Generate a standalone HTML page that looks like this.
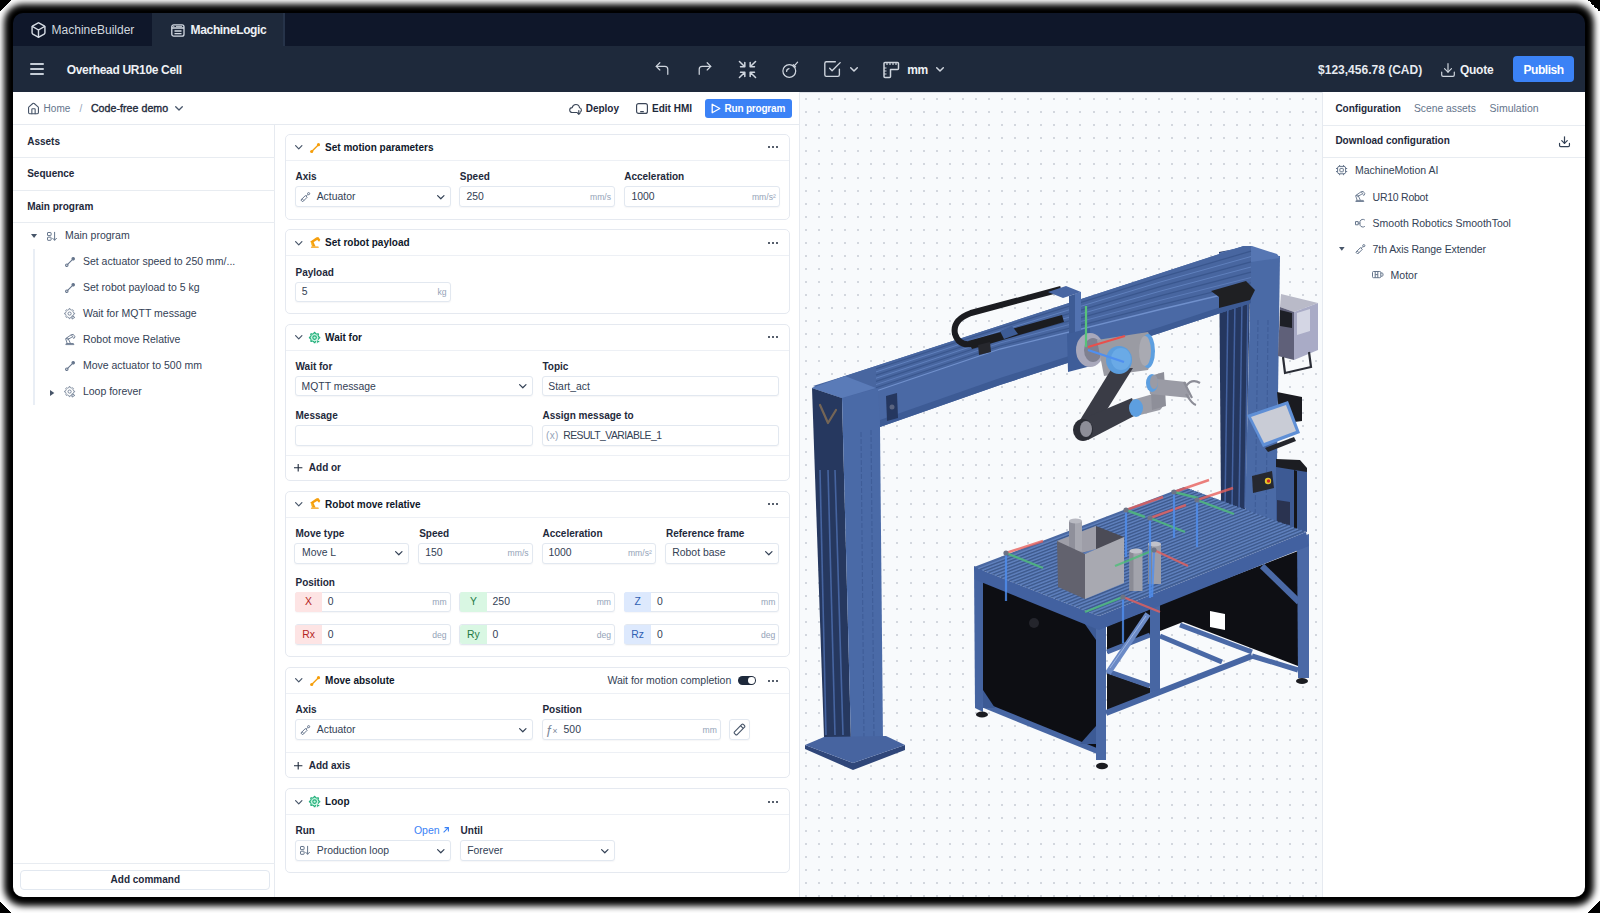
<!DOCTYPE html>
<html><head><meta charset="utf-8">
<style>
*{box-sizing:border-box;margin:0;padding:0}
html,body{width:1600px;height:913px;overflow:hidden;background:#000;font-family:"Liberation Sans",sans-serif;}
.bg{position:absolute;left:0;top:0;width:1600px;height:913px;background:#fff}
.cn{position:absolute;width:12px;height:12px}
.win{position:absolute;left:13px;top:13px;width:1572px;height:884px;border-radius:10px;overflow:hidden;background:transparent;box-shadow:0 0 6px 9px #000}
.in{position:absolute;left:-13px;top:-13px;width:1600px;height:913px}
.a{position:absolute}
.t{position:absolute;white-space:nowrap;line-height:1}
svg{overflow:visible}
</style></head>
<body><div class="bg"></div><div class="cn" style="left:0;top:0;background:linear-gradient(135deg,#000 50%,rgba(0,0,0,0) 50%)"></div><div class="cn" style="right:0;top:0;background:linear-gradient(225deg,#000 50%,rgba(0,0,0,0) 50%)"></div><div class="cn" style="left:0;bottom:0;background:linear-gradient(45deg,#000 50%,rgba(0,0,0,0) 50%)"></div><div class="cn" style="right:0;bottom:0;background:linear-gradient(315deg,#000 50%,rgba(0,0,0,0) 50%)"></div><div style="position:absolute;left:11px;top:11px;width:1576px;height:888px;border-radius:12px;background:#000"></div>
<div class="win"><div class="in">
<div class="a" style="left:13px;top:13px;width:1572px;height:33px;background:#0f172a"></div>
<div class="a" style="left:152px;top:13px;width:133px;height:33px;background:#1e293b;border-right:2px solid #263349"></div>
<div class="a" style="left:13px;top:46px;width:1572px;height:46px;background:#1e293b"></div>
<svg class="a" style="left:31px;top:22px;" width="15" height="16" viewBox="1.5 1.5 21 21"><g fill="none" stroke="#d4dae3" stroke-width="2" stroke-linejoin="round" stroke-linecap="round"><path d="M21 8a2 2 0 0 0-1-1.73l-7-4a2 2 0 0 0-2 0l-7 4A2 2 0 0 0 3 8v8a2 2 0 0 0 1 1.73l7 4a2 2 0 0 0 2 0l7-4A2 2 0 0 0 21 16Z"/><path d="m3.3 7 8.7 5 8.7-5"/><path d="M12 22V12"/></g></svg>
<div class="t" style="left:51.6px;top:24.00px;font-size:12px;font-weight:400;color:#d1d7df;">MachineBuilder</div>
<svg class="a" style="left:170.5px;top:23.5px;" width="14" height="13" viewBox="0 0 14 13"><g fill="none" stroke="#d4dae3" stroke-width="1.3"><rect x="0.8" y="0.8" width="12.2" height="11.4" rx="2"/><path d="M0.8 4H13"/><path d="M3.5 7H10.5M3.5 9.6H10.5"/></g><circle cx="2.8" cy="2.4" r="0.6" fill="#d4dae3"/><path d="M5 2.4H11" stroke="#d4dae3" stroke-width="0.9"/></svg>
<div class="t" style="left:190.6px;top:24.00px;font-size:12px;font-weight:700;color:#eef1f5;letter-spacing:-0.35px">MachineLogic</div>
<div class="a" style="left:30px;top:63.349999999999994px;width:14px;height:1.5px;background:#c5ccd6;border-radius:1px"></div>
<div class="a" style="left:30px;top:68.35px;width:14px;height:1.5px;background:#c5ccd6;border-radius:1px"></div>
<div class="a" style="left:30px;top:73.25px;width:14px;height:1.5px;background:#c5ccd6;border-radius:1px"></div>
<div class="t" style="left:66.7px;top:64.00px;font-size:12px;font-weight:700;color:#eef1f5;letter-spacing:-0.33px">Overhead UR10e Cell</div>
<svg class="a" style="left:655px;top:62px;" width="14" height="13" viewBox="3 3 18 18"><g fill="none" stroke="#cfd5de" stroke-width="1.7" stroke-linecap="round" stroke-linejoin="round"><polyline points="9 14 4 9 9 4"/><path d="M20 20v-7a4 4 0 0 0-4-4H4"/></g></svg>
<svg class="a" style="left:698px;top:62px;" width="14" height="13" viewBox="3 3 18 18"><g fill="none" stroke="#cfd5de" stroke-width="1.7" stroke-linecap="round" stroke-linejoin="round"><polyline points="15 14 20 9 15 4"/><path d="M4 20v-7a4 4 0 0 1 4-4h12"/></g></svg>
<svg class="a" style="left:738.5px;top:61px;" width="17" height="17" viewBox="2.5 2.5 19 19"><g fill="none" stroke="#cfd5de" stroke-width="1.7" stroke-linecap="round" stroke-linejoin="round"><path d="m15 15 6 6m-6-6v4.8m0-4.8h4.8"/><path d="M9 19.8V15m0 0H4.2M9 15l-6 6"/><path d="M15 4.2V9m0 0h4.8M15 9l6-6"/><path d="M9 4.2V9m0 0H4.2M9 9 3 3"/></g></svg>
<svg class="a" style="left:780.5px;top:61px;" width="18" height="17" viewBox="0 0 18 17"><g fill="none" stroke="#cfd5de" stroke-width="1.25" stroke-linecap="round" stroke-linejoin="round"><circle cx="8.3" cy="10" r="6.4"/><path d="M5.6 10.4a2.9 2.9 0 0 1 2.4-2.7"/><path d="M12.6 5.6 L16.6 1.2"/><path d="M12.3 3.6 L14.6 5.9"/></g></svg>
<svg class="a" style="left:824px;top:61px;" width="17" height="17" viewBox="2 2 21 21"><g fill="none" stroke="#cfd5de" stroke-width="1.7" stroke-linecap="round" stroke-linejoin="round"><polyline points="9 11 12 14 22 4"/><path d="M21 12v7a2 2 0 0 1-2 2H5a2 2 0 0 1-2-2V5a2 2 0 0 1 2-2h11"/></g></svg>
<svg class="a" style="left:850px;top:66.5px;" width="8" height="5" viewBox="0 0 8 5"><path d="M0.7 0.7 L4 4 L7.3 0.7" fill="none" stroke="#cfd5de" stroke-width="1.5" stroke-linecap="round" stroke-linejoin="round"/></svg>
<svg class="a" style="left:883px;top:61.5px;" width="16" height="16" viewBox="0 0 16 16"><g fill="none" stroke="#cfd5de" stroke-width="1.5" stroke-linejoin="round"><path d="M1 1.5a1 1 0 0 1 1-1h12.5a1 1 0 0 1 1 1v5a1 1 0 0 1-1 1H7.5v7a1 1 0 0 1-1 1H2a1 1 0 0 1-1-1Z"/><path d="M4 0.5v2.5M7 0.5v2.5M10 0.5v2.5M13 0.5v2.5M1 9h2.5M1 12h2.5M1 6h2.5" stroke-width="1.2"/></g></svg>
<div class="t" style="left:907.3px;top:64.00px;font-size:12px;font-weight:700;color:#eef1f5;letter-spacing:-0.4px">mm</div>
<svg class="a" style="left:935.5px;top:66.5px;" width="8" height="5" viewBox="0 0 8 5"><path d="M0.7 0.7 L4 4 L7.3 0.7" fill="none" stroke="#cfd5de" stroke-width="1.5" stroke-linecap="round" stroke-linejoin="round"/></svg>
<div class="t" style="left:1318.1px;top:64.00px;font-size:12px;font-weight:700;color:#e6eaf0;">$123,456.78 (CAD)</div>
<svg class="a" style="left:1441px;top:62.5px;" width="14" height="14" viewBox="2 2 20 20"><g fill="none" stroke="#cfd5de" stroke-width="1.7" stroke-linecap="round" stroke-linejoin="round"><path d="M21 15v4a2 2 0 0 1-2 2H5a2 2 0 0 1-2-2v-4"/><polyline points="7 10 12 15 17 10"/><line x1="12" y1="15" x2="12" y2="3"/></g></svg>
<div class="t" style="left:1459.9px;top:64.00px;font-size:12px;font-weight:700;color:#eef1f5;letter-spacing:-0.25px">Quote</div>
<div class="a" style="left:1513px;top:56px;width:61px;height:26px;background:#3b82f6;border-radius:4px"></div>
<div class="t" style="left:1523.5px;top:64.00px;font-size:12px;font-weight:700;color:#ffffff;letter-spacing:-0.45px">Publish</div>
<div class="a" style="left:13px;top:92px;width:786px;height:33px;background:#fff;border-bottom:1px solid #e6eaf0"></div>
<svg class="a" style="left:28px;top:102.5px;" width="11" height="11.5" viewBox="2 1.5 20 21"><g fill="none" stroke="#475569" stroke-width="2" stroke-linecap="round" stroke-linejoin="round"><path d="M15 21v-8a1 1 0 0 0-1-1h-4a1 1 0 0 0-1 1v8"/><path d="M3 10a2 2 0 0 1 .709-1.528l7-5.999a2 2 0 0 1 2.582 0l7 5.999A2 2 0 0 1 21 10v9a2 2 0 0 1-2 2H5a2 2 0 0 1-2-2z"/></g></svg>
<div class="t" style="left:43.6px;top:104.00px;font-size:10px;font-weight:400;color:#64748b;">Home</div>
<div class="t" style="left:79.5px;top:104.00px;font-size:10px;font-weight:400;color:#94a3b8;">/</div>
<div class="t" style="left:90.9px;top:103.00px;font-size:10.6px;font-weight:400;color:#1e293b;-webkit-text-stroke:0.35px #1e293b;letter-spacing:0.05px">Code-free demo</div>
<svg class="a" style="left:174.5px;top:106px;" width="8" height="5" viewBox="0 0 8 5"><path d="M0.7 0.7 L4 4 L7.3 0.7" fill="none" stroke="#475569" stroke-width="1.3" stroke-linecap="round" stroke-linejoin="round"/></svg>
<svg class="a" style="left:568.8px;top:103.2px;" width="13" height="12" viewBox="0 0 13 12"><g fill="none" stroke="#3b4658" stroke-width="1.15" stroke-linecap="round" stroke-linejoin="round"><path d="M7.8 9.5 H3.3 C1.6 9.5 0.7 8.3 0.7 7 C0.7 5.6 1.8 4.6 3.2 4.6 C3.6 2.6 5.2 1.5 6.9 1.5 C8.9 1.5 10.3 2.9 10.5 4.8 C11.7 5.0 12.4 6 12.4 7.1 C12.4 7.9 12.1 8.5 11.6 8.9"/><path d="M9.8 7.6 V11.2 M8.4 9.9 L9.8 11.3 L11.2 9.9"/></g></svg>
<div class="t" style="left:585.7px;top:104.00px;font-size:10px;font-weight:700;color:#1e293b;">Deploy</div>
<svg class="a" style="left:636px;top:103px;" width="12" height="11" viewBox="0 0 12 11"><g fill="none" stroke="#3b4658" stroke-width="1.15"><rect x="0.6" y="0.6" width="10.8" height="9.8" rx="2"/><path d="M4.2 8.6h3.6" stroke-width="1.3"/></g></svg>
<div class="t" style="left:652.0px;top:104.00px;font-size:10px;font-weight:700;color:#1e293b;">Edit HMI</div>
<div class="a" style="left:705px;top:98.5px;width:87px;height:19.5px;background:#3b82f6;border-radius:3px"></div>
<svg class="a" style="left:710.5px;top:102.5px;" width="10" height="11" viewBox="0 0 10 11"><path d="M1.2 1.2 L8.8 5.5 L1.2 9.8 Z" fill="none" stroke="#fff" stroke-width="1.3" stroke-linejoin="round"/></svg>
<div class="t" style="left:724.5px;top:104.00px;font-size:10px;font-weight:700;color:#ffffff;letter-spacing:-0.2px">Run program</div>
<div class="a" style="left:13px;top:125px;width:262px;height:772px;background:#fff;border-right:1px solid #e6eaf0"></div>
<div class="a" style="left:13px;top:157px;width:262px;height:1px;background:#e8ecf1"></div>
<div class="a" style="left:13px;top:190px;width:262px;height:1px;background:#e8ecf1"></div>
<div class="a" style="left:13px;top:222px;width:262px;height:1px;background:#e8ecf1"></div>
<div class="t" style="left:27.2px;top:137.00px;font-size:10px;font-weight:700;color:#1e293b;">Assets</div>
<div class="t" style="left:27.2px;top:169.00px;font-size:10px;font-weight:700;color:#1e293b;">Sequence</div>
<div class="t" style="left:27.2px;top:202.00px;font-size:10px;font-weight:700;color:#1e293b;">Main program</div>
<div class="a" style="left:13px;top:862.5px;width:262px;height:1.0px;background:#e8ecf1"></div>
<div class="a" style="left:20px;top:870px;width:250px;height:20px;background:#fff;border:1px solid #e2e8f0;border-radius:4px"></div>
<div class="t" style="left:110.6px;top:875.00px;font-size:10px;font-weight:700;color:#1e293b;">Add command</div>
<div class="a" style="left:275px;top:125px;width:524px;height:772px;background:#fff"></div>
<div class="a" style="left:799px;top:92px;width:1px;height:805px;background:#e6eaf0"></div>
<div class="a" style="left:800px;top:92px;width:522px;height:805px;background-color:#f8fafc;border-top:1px solid #dfe2e8"></div>
<svg class="a" style="left:0;top:0" width="1600" height="913" viewBox="0 0 1600 913"><path d="M805 98h2v2h-2zM805 111h2v2h-2zM805 124h2v2h-2zM805 137h2v2h-2zM805 150h2v2h-2zM805 163h2v2h-2zM805 177h2v2h-2zM805 190h2v2h-2zM805 203h2v2h-2zM805 216h2v2h-2zM805 229h2v2h-2zM805 242h2v2h-2zM805 255h2v2h-2zM805 268h2v2h-2zM805 281h2v2h-2zM805 294h2v2h-2zM805 307h2v2h-2zM805 320h2v2h-2zM805 333h2v2h-2zM805 346h2v2h-2zM805 360h2v2h-2zM805 373h2v2h-2zM805 386h2v2h-2zM805 399h2v2h-2zM805 412h2v2h-2zM805 425h2v2h-2zM805 438h2v2h-2zM805 451h2v2h-2zM805 464h2v2h-2zM805 477h2v2h-2zM805 490h2v2h-2zM805 503h2v2h-2zM805 516h2v2h-2zM805 529h2v2h-2zM805 542h2v2h-2zM805 556h2v2h-2zM805 569h2v2h-2zM805 582h2v2h-2zM805 595h2v2h-2zM805 608h2v2h-2zM805 621h2v2h-2zM805 634h2v2h-2zM805 647h2v2h-2zM805 660h2v2h-2zM805 673h2v2h-2zM805 686h2v2h-2zM805 699h2v2h-2zM805 712h2v2h-2zM805 725h2v2h-2zM805 739h2v2h-2zM805 752h2v2h-2zM805 765h2v2h-2zM805 778h2v2h-2zM805 791h2v2h-2zM805 804h2v2h-2zM805 817h2v2h-2zM805 830h2v2h-2zM805 843h2v2h-2zM805 856h2v2h-2zM805 869h2v2h-2zM805 882h2v2h-2zM805 895h2v2h-2zM818 98h2v2h-2zM818 111h2v2h-2zM818 124h2v2h-2zM818 137h2v2h-2zM818 150h2v2h-2zM818 163h2v2h-2zM818 177h2v2h-2zM818 190h2v2h-2zM818 203h2v2h-2zM818 216h2v2h-2zM818 229h2v2h-2zM818 242h2v2h-2zM818 255h2v2h-2zM818 268h2v2h-2zM818 281h2v2h-2zM818 294h2v2h-2zM818 307h2v2h-2zM818 320h2v2h-2zM818 333h2v2h-2zM818 346h2v2h-2zM818 360h2v2h-2zM818 373h2v2h-2zM818 386h2v2h-2zM818 399h2v2h-2zM818 412h2v2h-2zM818 425h2v2h-2zM818 438h2v2h-2zM818 451h2v2h-2zM818 464h2v2h-2zM818 477h2v2h-2zM818 490h2v2h-2zM818 503h2v2h-2zM818 516h2v2h-2zM818 529h2v2h-2zM818 542h2v2h-2zM818 556h2v2h-2zM818 569h2v2h-2zM818 582h2v2h-2zM818 595h2v2h-2zM818 608h2v2h-2zM818 621h2v2h-2zM818 634h2v2h-2zM818 647h2v2h-2zM818 660h2v2h-2zM818 673h2v2h-2zM818 686h2v2h-2zM818 699h2v2h-2zM818 712h2v2h-2zM818 725h2v2h-2zM818 739h2v2h-2zM818 752h2v2h-2zM818 765h2v2h-2zM818 778h2v2h-2zM818 791h2v2h-2zM818 804h2v2h-2zM818 817h2v2h-2zM818 830h2v2h-2zM818 843h2v2h-2zM818 856h2v2h-2zM818 869h2v2h-2zM818 882h2v2h-2zM818 895h2v2h-2zM831 98h2v2h-2zM831 111h2v2h-2zM831 124h2v2h-2zM831 137h2v2h-2zM831 150h2v2h-2zM831 163h2v2h-2zM831 177h2v2h-2zM831 190h2v2h-2zM831 203h2v2h-2zM831 216h2v2h-2zM831 229h2v2h-2zM831 242h2v2h-2zM831 255h2v2h-2zM831 268h2v2h-2zM831 281h2v2h-2zM831 294h2v2h-2zM831 307h2v2h-2zM831 320h2v2h-2zM831 333h2v2h-2zM831 346h2v2h-2zM831 360h2v2h-2zM831 373h2v2h-2zM831 386h2v2h-2zM831 399h2v2h-2zM831 412h2v2h-2zM831 425h2v2h-2zM831 438h2v2h-2zM831 451h2v2h-2zM831 464h2v2h-2zM831 477h2v2h-2zM831 490h2v2h-2zM831 503h2v2h-2zM831 516h2v2h-2zM831 529h2v2h-2zM831 542h2v2h-2zM831 556h2v2h-2zM831 569h2v2h-2zM831 582h2v2h-2zM831 595h2v2h-2zM831 608h2v2h-2zM831 621h2v2h-2zM831 634h2v2h-2zM831 647h2v2h-2zM831 660h2v2h-2zM831 673h2v2h-2zM831 686h2v2h-2zM831 699h2v2h-2zM831 712h2v2h-2zM831 725h2v2h-2zM831 739h2v2h-2zM831 752h2v2h-2zM831 765h2v2h-2zM831 778h2v2h-2zM831 791h2v2h-2zM831 804h2v2h-2zM831 817h2v2h-2zM831 830h2v2h-2zM831 843h2v2h-2zM831 856h2v2h-2zM831 869h2v2h-2zM831 882h2v2h-2zM831 895h2v2h-2zM844 98h2v2h-2zM844 111h2v2h-2zM844 124h2v2h-2zM844 137h2v2h-2zM844 150h2v2h-2zM844 163h2v2h-2zM844 177h2v2h-2zM844 190h2v2h-2zM844 203h2v2h-2zM844 216h2v2h-2zM844 229h2v2h-2zM844 242h2v2h-2zM844 255h2v2h-2zM844 268h2v2h-2zM844 281h2v2h-2zM844 294h2v2h-2zM844 307h2v2h-2zM844 320h2v2h-2zM844 333h2v2h-2zM844 346h2v2h-2zM844 360h2v2h-2zM844 373h2v2h-2zM844 386h2v2h-2zM844 399h2v2h-2zM844 412h2v2h-2zM844 425h2v2h-2zM844 438h2v2h-2zM844 451h2v2h-2zM844 464h2v2h-2zM844 477h2v2h-2zM844 490h2v2h-2zM844 503h2v2h-2zM844 516h2v2h-2zM844 529h2v2h-2zM844 542h2v2h-2zM844 556h2v2h-2zM844 569h2v2h-2zM844 582h2v2h-2zM844 595h2v2h-2zM844 608h2v2h-2zM844 621h2v2h-2zM844 634h2v2h-2zM844 647h2v2h-2zM844 660h2v2h-2zM844 673h2v2h-2zM844 686h2v2h-2zM844 699h2v2h-2zM844 712h2v2h-2zM844 725h2v2h-2zM844 739h2v2h-2zM844 752h2v2h-2zM844 765h2v2h-2zM844 778h2v2h-2zM844 791h2v2h-2zM844 804h2v2h-2zM844 817h2v2h-2zM844 830h2v2h-2zM844 843h2v2h-2zM844 856h2v2h-2zM844 869h2v2h-2zM844 882h2v2h-2zM844 895h2v2h-2zM857 98h2v2h-2zM857 111h2v2h-2zM857 124h2v2h-2zM857 137h2v2h-2zM857 150h2v2h-2zM857 163h2v2h-2zM857 177h2v2h-2zM857 190h2v2h-2zM857 203h2v2h-2zM857 216h2v2h-2zM857 229h2v2h-2zM857 242h2v2h-2zM857 255h2v2h-2zM857 268h2v2h-2zM857 281h2v2h-2zM857 294h2v2h-2zM857 307h2v2h-2zM857 320h2v2h-2zM857 333h2v2h-2zM857 346h2v2h-2zM857 360h2v2h-2zM857 373h2v2h-2zM857 386h2v2h-2zM857 399h2v2h-2zM857 412h2v2h-2zM857 425h2v2h-2zM857 438h2v2h-2zM857 451h2v2h-2zM857 464h2v2h-2zM857 477h2v2h-2zM857 490h2v2h-2zM857 503h2v2h-2zM857 516h2v2h-2zM857 529h2v2h-2zM857 542h2v2h-2zM857 556h2v2h-2zM857 569h2v2h-2zM857 582h2v2h-2zM857 595h2v2h-2zM857 608h2v2h-2zM857 621h2v2h-2zM857 634h2v2h-2zM857 647h2v2h-2zM857 660h2v2h-2zM857 673h2v2h-2zM857 686h2v2h-2zM857 699h2v2h-2zM857 712h2v2h-2zM857 725h2v2h-2zM857 739h2v2h-2zM857 752h2v2h-2zM857 765h2v2h-2zM857 778h2v2h-2zM857 791h2v2h-2zM857 804h2v2h-2zM857 817h2v2h-2zM857 830h2v2h-2zM857 843h2v2h-2zM857 856h2v2h-2zM857 869h2v2h-2zM857 882h2v2h-2zM857 895h2v2h-2zM870 98h2v2h-2zM870 111h2v2h-2zM870 124h2v2h-2zM870 137h2v2h-2zM870 150h2v2h-2zM870 163h2v2h-2zM870 177h2v2h-2zM870 190h2v2h-2zM870 203h2v2h-2zM870 216h2v2h-2zM870 229h2v2h-2zM870 242h2v2h-2zM870 255h2v2h-2zM870 268h2v2h-2zM870 281h2v2h-2zM870 294h2v2h-2zM870 307h2v2h-2zM870 320h2v2h-2zM870 333h2v2h-2zM870 346h2v2h-2zM870 360h2v2h-2zM870 373h2v2h-2zM870 386h2v2h-2zM870 399h2v2h-2zM870 412h2v2h-2zM870 425h2v2h-2zM870 438h2v2h-2zM870 451h2v2h-2zM870 464h2v2h-2zM870 477h2v2h-2zM870 490h2v2h-2zM870 503h2v2h-2zM870 516h2v2h-2zM870 529h2v2h-2zM870 542h2v2h-2zM870 556h2v2h-2zM870 569h2v2h-2zM870 582h2v2h-2zM870 595h2v2h-2zM870 608h2v2h-2zM870 621h2v2h-2zM870 634h2v2h-2zM870 647h2v2h-2zM870 660h2v2h-2zM870 673h2v2h-2zM870 686h2v2h-2zM870 699h2v2h-2zM870 712h2v2h-2zM870 725h2v2h-2zM870 739h2v2h-2zM870 752h2v2h-2zM870 765h2v2h-2zM870 778h2v2h-2zM870 791h2v2h-2zM870 804h2v2h-2zM870 817h2v2h-2zM870 830h2v2h-2zM870 843h2v2h-2zM870 856h2v2h-2zM870 869h2v2h-2zM870 882h2v2h-2zM870 895h2v2h-2zM883 98h2v2h-2zM883 111h2v2h-2zM883 124h2v2h-2zM883 137h2v2h-2zM883 150h2v2h-2zM883 163h2v2h-2zM883 177h2v2h-2zM883 190h2v2h-2zM883 203h2v2h-2zM883 216h2v2h-2zM883 229h2v2h-2zM883 242h2v2h-2zM883 255h2v2h-2zM883 268h2v2h-2zM883 281h2v2h-2zM883 294h2v2h-2zM883 307h2v2h-2zM883 320h2v2h-2zM883 333h2v2h-2zM883 346h2v2h-2zM883 360h2v2h-2zM883 373h2v2h-2zM883 386h2v2h-2zM883 399h2v2h-2zM883 412h2v2h-2zM883 425h2v2h-2zM883 438h2v2h-2zM883 451h2v2h-2zM883 464h2v2h-2zM883 477h2v2h-2zM883 490h2v2h-2zM883 503h2v2h-2zM883 516h2v2h-2zM883 529h2v2h-2zM883 542h2v2h-2zM883 556h2v2h-2zM883 569h2v2h-2zM883 582h2v2h-2zM883 595h2v2h-2zM883 608h2v2h-2zM883 621h2v2h-2zM883 634h2v2h-2zM883 647h2v2h-2zM883 660h2v2h-2zM883 673h2v2h-2zM883 686h2v2h-2zM883 699h2v2h-2zM883 712h2v2h-2zM883 725h2v2h-2zM883 739h2v2h-2zM883 752h2v2h-2zM883 765h2v2h-2zM883 778h2v2h-2zM883 791h2v2h-2zM883 804h2v2h-2zM883 817h2v2h-2zM883 830h2v2h-2zM883 843h2v2h-2zM883 856h2v2h-2zM883 869h2v2h-2zM883 882h2v2h-2zM883 895h2v2h-2zM896 98h2v2h-2zM896 111h2v2h-2zM896 124h2v2h-2zM896 137h2v2h-2zM896 150h2v2h-2zM896 163h2v2h-2zM896 177h2v2h-2zM896 190h2v2h-2zM896 203h2v2h-2zM896 216h2v2h-2zM896 229h2v2h-2zM896 242h2v2h-2zM896 255h2v2h-2zM896 268h2v2h-2zM896 281h2v2h-2zM896 294h2v2h-2zM896 307h2v2h-2zM896 320h2v2h-2zM896 333h2v2h-2zM896 346h2v2h-2zM896 360h2v2h-2zM896 373h2v2h-2zM896 386h2v2h-2zM896 399h2v2h-2zM896 412h2v2h-2zM896 425h2v2h-2zM896 438h2v2h-2zM896 451h2v2h-2zM896 464h2v2h-2zM896 477h2v2h-2zM896 490h2v2h-2zM896 503h2v2h-2zM896 516h2v2h-2zM896 529h2v2h-2zM896 542h2v2h-2zM896 556h2v2h-2zM896 569h2v2h-2zM896 582h2v2h-2zM896 595h2v2h-2zM896 608h2v2h-2zM896 621h2v2h-2zM896 634h2v2h-2zM896 647h2v2h-2zM896 660h2v2h-2zM896 673h2v2h-2zM896 686h2v2h-2zM896 699h2v2h-2zM896 712h2v2h-2zM896 725h2v2h-2zM896 739h2v2h-2zM896 752h2v2h-2zM896 765h2v2h-2zM896 778h2v2h-2zM896 791h2v2h-2zM896 804h2v2h-2zM896 817h2v2h-2zM896 830h2v2h-2zM896 843h2v2h-2zM896 856h2v2h-2zM896 869h2v2h-2zM896 882h2v2h-2zM896 895h2v2h-2zM910 98h2v2h-2zM910 111h2v2h-2zM910 124h2v2h-2zM910 137h2v2h-2zM910 150h2v2h-2zM910 163h2v2h-2zM910 177h2v2h-2zM910 190h2v2h-2zM910 203h2v2h-2zM910 216h2v2h-2zM910 229h2v2h-2zM910 242h2v2h-2zM910 255h2v2h-2zM910 268h2v2h-2zM910 281h2v2h-2zM910 294h2v2h-2zM910 307h2v2h-2zM910 320h2v2h-2zM910 333h2v2h-2zM910 346h2v2h-2zM910 360h2v2h-2zM910 373h2v2h-2zM910 386h2v2h-2zM910 399h2v2h-2zM910 412h2v2h-2zM910 425h2v2h-2zM910 438h2v2h-2zM910 451h2v2h-2zM910 464h2v2h-2zM910 477h2v2h-2zM910 490h2v2h-2zM910 503h2v2h-2zM910 516h2v2h-2zM910 529h2v2h-2zM910 542h2v2h-2zM910 556h2v2h-2zM910 569h2v2h-2zM910 582h2v2h-2zM910 595h2v2h-2zM910 608h2v2h-2zM910 621h2v2h-2zM910 634h2v2h-2zM910 647h2v2h-2zM910 660h2v2h-2zM910 673h2v2h-2zM910 686h2v2h-2zM910 699h2v2h-2zM910 712h2v2h-2zM910 725h2v2h-2zM910 739h2v2h-2zM910 752h2v2h-2zM910 765h2v2h-2zM910 778h2v2h-2zM910 791h2v2h-2zM910 804h2v2h-2zM910 817h2v2h-2zM910 830h2v2h-2zM910 843h2v2h-2zM910 856h2v2h-2zM910 869h2v2h-2zM910 882h2v2h-2zM910 895h2v2h-2zM923 98h2v2h-2zM923 111h2v2h-2zM923 124h2v2h-2zM923 137h2v2h-2zM923 150h2v2h-2zM923 163h2v2h-2zM923 177h2v2h-2zM923 190h2v2h-2zM923 203h2v2h-2zM923 216h2v2h-2zM923 229h2v2h-2zM923 242h2v2h-2zM923 255h2v2h-2zM923 268h2v2h-2zM923 281h2v2h-2zM923 294h2v2h-2zM923 307h2v2h-2zM923 320h2v2h-2zM923 333h2v2h-2zM923 346h2v2h-2zM923 360h2v2h-2zM923 373h2v2h-2zM923 386h2v2h-2zM923 399h2v2h-2zM923 412h2v2h-2zM923 425h2v2h-2zM923 438h2v2h-2zM923 451h2v2h-2zM923 464h2v2h-2zM923 477h2v2h-2zM923 490h2v2h-2zM923 503h2v2h-2zM923 516h2v2h-2zM923 529h2v2h-2zM923 542h2v2h-2zM923 556h2v2h-2zM923 569h2v2h-2zM923 582h2v2h-2zM923 595h2v2h-2zM923 608h2v2h-2zM923 621h2v2h-2zM923 634h2v2h-2zM923 647h2v2h-2zM923 660h2v2h-2zM923 673h2v2h-2zM923 686h2v2h-2zM923 699h2v2h-2zM923 712h2v2h-2zM923 725h2v2h-2zM923 739h2v2h-2zM923 752h2v2h-2zM923 765h2v2h-2zM923 778h2v2h-2zM923 791h2v2h-2zM923 804h2v2h-2zM923 817h2v2h-2zM923 830h2v2h-2zM923 843h2v2h-2zM923 856h2v2h-2zM923 869h2v2h-2zM923 882h2v2h-2zM923 895h2v2h-2zM936 98h2v2h-2zM936 111h2v2h-2zM936 124h2v2h-2zM936 137h2v2h-2zM936 150h2v2h-2zM936 163h2v2h-2zM936 177h2v2h-2zM936 190h2v2h-2zM936 203h2v2h-2zM936 216h2v2h-2zM936 229h2v2h-2zM936 242h2v2h-2zM936 255h2v2h-2zM936 268h2v2h-2zM936 281h2v2h-2zM936 294h2v2h-2zM936 307h2v2h-2zM936 320h2v2h-2zM936 333h2v2h-2zM936 346h2v2h-2zM936 360h2v2h-2zM936 373h2v2h-2zM936 386h2v2h-2zM936 399h2v2h-2zM936 412h2v2h-2zM936 425h2v2h-2zM936 438h2v2h-2zM936 451h2v2h-2zM936 464h2v2h-2zM936 477h2v2h-2zM936 490h2v2h-2zM936 503h2v2h-2zM936 516h2v2h-2zM936 529h2v2h-2zM936 542h2v2h-2zM936 556h2v2h-2zM936 569h2v2h-2zM936 582h2v2h-2zM936 595h2v2h-2zM936 608h2v2h-2zM936 621h2v2h-2zM936 634h2v2h-2zM936 647h2v2h-2zM936 660h2v2h-2zM936 673h2v2h-2zM936 686h2v2h-2zM936 699h2v2h-2zM936 712h2v2h-2zM936 725h2v2h-2zM936 739h2v2h-2zM936 752h2v2h-2zM936 765h2v2h-2zM936 778h2v2h-2zM936 791h2v2h-2zM936 804h2v2h-2zM936 817h2v2h-2zM936 830h2v2h-2zM936 843h2v2h-2zM936 856h2v2h-2zM936 869h2v2h-2zM936 882h2v2h-2zM936 895h2v2h-2zM949 98h2v2h-2zM949 111h2v2h-2zM949 124h2v2h-2zM949 137h2v2h-2zM949 150h2v2h-2zM949 163h2v2h-2zM949 177h2v2h-2zM949 190h2v2h-2zM949 203h2v2h-2zM949 216h2v2h-2zM949 229h2v2h-2zM949 242h2v2h-2zM949 255h2v2h-2zM949 268h2v2h-2zM949 281h2v2h-2zM949 294h2v2h-2zM949 307h2v2h-2zM949 320h2v2h-2zM949 333h2v2h-2zM949 346h2v2h-2zM949 360h2v2h-2zM949 373h2v2h-2zM949 386h2v2h-2zM949 399h2v2h-2zM949 412h2v2h-2zM949 425h2v2h-2zM949 438h2v2h-2zM949 451h2v2h-2zM949 464h2v2h-2zM949 477h2v2h-2zM949 490h2v2h-2zM949 503h2v2h-2zM949 516h2v2h-2zM949 529h2v2h-2zM949 542h2v2h-2zM949 556h2v2h-2zM949 569h2v2h-2zM949 582h2v2h-2zM949 595h2v2h-2zM949 608h2v2h-2zM949 621h2v2h-2zM949 634h2v2h-2zM949 647h2v2h-2zM949 660h2v2h-2zM949 673h2v2h-2zM949 686h2v2h-2zM949 699h2v2h-2zM949 712h2v2h-2zM949 725h2v2h-2zM949 739h2v2h-2zM949 752h2v2h-2zM949 765h2v2h-2zM949 778h2v2h-2zM949 791h2v2h-2zM949 804h2v2h-2zM949 817h2v2h-2zM949 830h2v2h-2zM949 843h2v2h-2zM949 856h2v2h-2zM949 869h2v2h-2zM949 882h2v2h-2zM949 895h2v2h-2zM962 98h2v2h-2zM962 111h2v2h-2zM962 124h2v2h-2zM962 137h2v2h-2zM962 150h2v2h-2zM962 163h2v2h-2zM962 177h2v2h-2zM962 190h2v2h-2zM962 203h2v2h-2zM962 216h2v2h-2zM962 229h2v2h-2zM962 242h2v2h-2zM962 255h2v2h-2zM962 268h2v2h-2zM962 281h2v2h-2zM962 294h2v2h-2zM962 307h2v2h-2zM962 320h2v2h-2zM962 333h2v2h-2zM962 346h2v2h-2zM962 360h2v2h-2zM962 373h2v2h-2zM962 386h2v2h-2zM962 399h2v2h-2zM962 412h2v2h-2zM962 425h2v2h-2zM962 438h2v2h-2zM962 451h2v2h-2zM962 464h2v2h-2zM962 477h2v2h-2zM962 490h2v2h-2zM962 503h2v2h-2zM962 516h2v2h-2zM962 529h2v2h-2zM962 542h2v2h-2zM962 556h2v2h-2zM962 569h2v2h-2zM962 582h2v2h-2zM962 595h2v2h-2zM962 608h2v2h-2zM962 621h2v2h-2zM962 634h2v2h-2zM962 647h2v2h-2zM962 660h2v2h-2zM962 673h2v2h-2zM962 686h2v2h-2zM962 699h2v2h-2zM962 712h2v2h-2zM962 725h2v2h-2zM962 739h2v2h-2zM962 752h2v2h-2zM962 765h2v2h-2zM962 778h2v2h-2zM962 791h2v2h-2zM962 804h2v2h-2zM962 817h2v2h-2zM962 830h2v2h-2zM962 843h2v2h-2zM962 856h2v2h-2zM962 869h2v2h-2zM962 882h2v2h-2zM962 895h2v2h-2zM975 98h2v2h-2zM975 111h2v2h-2zM975 124h2v2h-2zM975 137h2v2h-2zM975 150h2v2h-2zM975 163h2v2h-2zM975 177h2v2h-2zM975 190h2v2h-2zM975 203h2v2h-2zM975 216h2v2h-2zM975 229h2v2h-2zM975 242h2v2h-2zM975 255h2v2h-2zM975 268h2v2h-2zM975 281h2v2h-2zM975 294h2v2h-2zM975 307h2v2h-2zM975 320h2v2h-2zM975 333h2v2h-2zM975 346h2v2h-2zM975 360h2v2h-2zM975 373h2v2h-2zM975 386h2v2h-2zM975 399h2v2h-2zM975 412h2v2h-2zM975 425h2v2h-2zM975 438h2v2h-2zM975 451h2v2h-2zM975 464h2v2h-2zM975 477h2v2h-2zM975 490h2v2h-2zM975 503h2v2h-2zM975 516h2v2h-2zM975 529h2v2h-2zM975 542h2v2h-2zM975 556h2v2h-2zM975 569h2v2h-2zM975 582h2v2h-2zM975 595h2v2h-2zM975 608h2v2h-2zM975 621h2v2h-2zM975 634h2v2h-2zM975 647h2v2h-2zM975 660h2v2h-2zM975 673h2v2h-2zM975 686h2v2h-2zM975 699h2v2h-2zM975 712h2v2h-2zM975 725h2v2h-2zM975 739h2v2h-2zM975 752h2v2h-2zM975 765h2v2h-2zM975 778h2v2h-2zM975 791h2v2h-2zM975 804h2v2h-2zM975 817h2v2h-2zM975 830h2v2h-2zM975 843h2v2h-2zM975 856h2v2h-2zM975 869h2v2h-2zM975 882h2v2h-2zM975 895h2v2h-2zM988 98h2v2h-2zM988 111h2v2h-2zM988 124h2v2h-2zM988 137h2v2h-2zM988 150h2v2h-2zM988 163h2v2h-2zM988 177h2v2h-2zM988 190h2v2h-2zM988 203h2v2h-2zM988 216h2v2h-2zM988 229h2v2h-2zM988 242h2v2h-2zM988 255h2v2h-2zM988 268h2v2h-2zM988 281h2v2h-2zM988 294h2v2h-2zM988 307h2v2h-2zM988 320h2v2h-2zM988 333h2v2h-2zM988 346h2v2h-2zM988 360h2v2h-2zM988 373h2v2h-2zM988 386h2v2h-2zM988 399h2v2h-2zM988 412h2v2h-2zM988 425h2v2h-2zM988 438h2v2h-2zM988 451h2v2h-2zM988 464h2v2h-2zM988 477h2v2h-2zM988 490h2v2h-2zM988 503h2v2h-2zM988 516h2v2h-2zM988 529h2v2h-2zM988 542h2v2h-2zM988 556h2v2h-2zM988 569h2v2h-2zM988 582h2v2h-2zM988 595h2v2h-2zM988 608h2v2h-2zM988 621h2v2h-2zM988 634h2v2h-2zM988 647h2v2h-2zM988 660h2v2h-2zM988 673h2v2h-2zM988 686h2v2h-2zM988 699h2v2h-2zM988 712h2v2h-2zM988 725h2v2h-2zM988 739h2v2h-2zM988 752h2v2h-2zM988 765h2v2h-2zM988 778h2v2h-2zM988 791h2v2h-2zM988 804h2v2h-2zM988 817h2v2h-2zM988 830h2v2h-2zM988 843h2v2h-2zM988 856h2v2h-2zM988 869h2v2h-2zM988 882h2v2h-2zM988 895h2v2h-2zM1001 98h2v2h-2zM1001 111h2v2h-2zM1001 124h2v2h-2zM1001 137h2v2h-2zM1001 150h2v2h-2zM1001 163h2v2h-2zM1001 177h2v2h-2zM1001 190h2v2h-2zM1001 203h2v2h-2zM1001 216h2v2h-2zM1001 229h2v2h-2zM1001 242h2v2h-2zM1001 255h2v2h-2zM1001 268h2v2h-2zM1001 281h2v2h-2zM1001 294h2v2h-2zM1001 307h2v2h-2zM1001 320h2v2h-2zM1001 333h2v2h-2zM1001 346h2v2h-2zM1001 360h2v2h-2zM1001 373h2v2h-2zM1001 386h2v2h-2zM1001 399h2v2h-2zM1001 412h2v2h-2zM1001 425h2v2h-2zM1001 438h2v2h-2zM1001 451h2v2h-2zM1001 464h2v2h-2zM1001 477h2v2h-2zM1001 490h2v2h-2zM1001 503h2v2h-2zM1001 516h2v2h-2zM1001 529h2v2h-2zM1001 542h2v2h-2zM1001 556h2v2h-2zM1001 569h2v2h-2zM1001 582h2v2h-2zM1001 595h2v2h-2zM1001 608h2v2h-2zM1001 621h2v2h-2zM1001 634h2v2h-2zM1001 647h2v2h-2zM1001 660h2v2h-2zM1001 673h2v2h-2zM1001 686h2v2h-2zM1001 699h2v2h-2zM1001 712h2v2h-2zM1001 725h2v2h-2zM1001 739h2v2h-2zM1001 752h2v2h-2zM1001 765h2v2h-2zM1001 778h2v2h-2zM1001 791h2v2h-2zM1001 804h2v2h-2zM1001 817h2v2h-2zM1001 830h2v2h-2zM1001 843h2v2h-2zM1001 856h2v2h-2zM1001 869h2v2h-2zM1001 882h2v2h-2zM1001 895h2v2h-2zM1014 98h2v2h-2zM1014 111h2v2h-2zM1014 124h2v2h-2zM1014 137h2v2h-2zM1014 150h2v2h-2zM1014 163h2v2h-2zM1014 177h2v2h-2zM1014 190h2v2h-2zM1014 203h2v2h-2zM1014 216h2v2h-2zM1014 229h2v2h-2zM1014 242h2v2h-2zM1014 255h2v2h-2zM1014 268h2v2h-2zM1014 281h2v2h-2zM1014 294h2v2h-2zM1014 307h2v2h-2zM1014 320h2v2h-2zM1014 333h2v2h-2zM1014 346h2v2h-2zM1014 360h2v2h-2zM1014 373h2v2h-2zM1014 386h2v2h-2zM1014 399h2v2h-2zM1014 412h2v2h-2zM1014 425h2v2h-2zM1014 438h2v2h-2zM1014 451h2v2h-2zM1014 464h2v2h-2zM1014 477h2v2h-2zM1014 490h2v2h-2zM1014 503h2v2h-2zM1014 516h2v2h-2zM1014 529h2v2h-2zM1014 542h2v2h-2zM1014 556h2v2h-2zM1014 569h2v2h-2zM1014 582h2v2h-2zM1014 595h2v2h-2zM1014 608h2v2h-2zM1014 621h2v2h-2zM1014 634h2v2h-2zM1014 647h2v2h-2zM1014 660h2v2h-2zM1014 673h2v2h-2zM1014 686h2v2h-2zM1014 699h2v2h-2zM1014 712h2v2h-2zM1014 725h2v2h-2zM1014 739h2v2h-2zM1014 752h2v2h-2zM1014 765h2v2h-2zM1014 778h2v2h-2zM1014 791h2v2h-2zM1014 804h2v2h-2zM1014 817h2v2h-2zM1014 830h2v2h-2zM1014 843h2v2h-2zM1014 856h2v2h-2zM1014 869h2v2h-2zM1014 882h2v2h-2zM1014 895h2v2h-2zM1027 98h2v2h-2zM1027 111h2v2h-2zM1027 124h2v2h-2zM1027 137h2v2h-2zM1027 150h2v2h-2zM1027 163h2v2h-2zM1027 177h2v2h-2zM1027 190h2v2h-2zM1027 203h2v2h-2zM1027 216h2v2h-2zM1027 229h2v2h-2zM1027 242h2v2h-2zM1027 255h2v2h-2zM1027 268h2v2h-2zM1027 281h2v2h-2zM1027 294h2v2h-2zM1027 307h2v2h-2zM1027 320h2v2h-2zM1027 333h2v2h-2zM1027 346h2v2h-2zM1027 360h2v2h-2zM1027 373h2v2h-2zM1027 386h2v2h-2zM1027 399h2v2h-2zM1027 412h2v2h-2zM1027 425h2v2h-2zM1027 438h2v2h-2zM1027 451h2v2h-2zM1027 464h2v2h-2zM1027 477h2v2h-2zM1027 490h2v2h-2zM1027 503h2v2h-2zM1027 516h2v2h-2zM1027 529h2v2h-2zM1027 542h2v2h-2zM1027 556h2v2h-2zM1027 569h2v2h-2zM1027 582h2v2h-2zM1027 595h2v2h-2zM1027 608h2v2h-2zM1027 621h2v2h-2zM1027 634h2v2h-2zM1027 647h2v2h-2zM1027 660h2v2h-2zM1027 673h2v2h-2zM1027 686h2v2h-2zM1027 699h2v2h-2zM1027 712h2v2h-2zM1027 725h2v2h-2zM1027 739h2v2h-2zM1027 752h2v2h-2zM1027 765h2v2h-2zM1027 778h2v2h-2zM1027 791h2v2h-2zM1027 804h2v2h-2zM1027 817h2v2h-2zM1027 830h2v2h-2zM1027 843h2v2h-2zM1027 856h2v2h-2zM1027 869h2v2h-2zM1027 882h2v2h-2zM1027 895h2v2h-2zM1040 98h2v2h-2zM1040 111h2v2h-2zM1040 124h2v2h-2zM1040 137h2v2h-2zM1040 150h2v2h-2zM1040 163h2v2h-2zM1040 177h2v2h-2zM1040 190h2v2h-2zM1040 203h2v2h-2zM1040 216h2v2h-2zM1040 229h2v2h-2zM1040 242h2v2h-2zM1040 255h2v2h-2zM1040 268h2v2h-2zM1040 281h2v2h-2zM1040 294h2v2h-2zM1040 307h2v2h-2zM1040 320h2v2h-2zM1040 333h2v2h-2zM1040 346h2v2h-2zM1040 360h2v2h-2zM1040 373h2v2h-2zM1040 386h2v2h-2zM1040 399h2v2h-2zM1040 412h2v2h-2zM1040 425h2v2h-2zM1040 438h2v2h-2zM1040 451h2v2h-2zM1040 464h2v2h-2zM1040 477h2v2h-2zM1040 490h2v2h-2zM1040 503h2v2h-2zM1040 516h2v2h-2zM1040 529h2v2h-2zM1040 542h2v2h-2zM1040 556h2v2h-2zM1040 569h2v2h-2zM1040 582h2v2h-2zM1040 595h2v2h-2zM1040 608h2v2h-2zM1040 621h2v2h-2zM1040 634h2v2h-2zM1040 647h2v2h-2zM1040 660h2v2h-2zM1040 673h2v2h-2zM1040 686h2v2h-2zM1040 699h2v2h-2zM1040 712h2v2h-2zM1040 725h2v2h-2zM1040 739h2v2h-2zM1040 752h2v2h-2zM1040 765h2v2h-2zM1040 778h2v2h-2zM1040 791h2v2h-2zM1040 804h2v2h-2zM1040 817h2v2h-2zM1040 830h2v2h-2zM1040 843h2v2h-2zM1040 856h2v2h-2zM1040 869h2v2h-2zM1040 882h2v2h-2zM1040 895h2v2h-2zM1053 98h2v2h-2zM1053 111h2v2h-2zM1053 124h2v2h-2zM1053 137h2v2h-2zM1053 150h2v2h-2zM1053 163h2v2h-2zM1053 177h2v2h-2zM1053 190h2v2h-2zM1053 203h2v2h-2zM1053 216h2v2h-2zM1053 229h2v2h-2zM1053 242h2v2h-2zM1053 255h2v2h-2zM1053 268h2v2h-2zM1053 281h2v2h-2zM1053 294h2v2h-2zM1053 307h2v2h-2zM1053 320h2v2h-2zM1053 333h2v2h-2zM1053 346h2v2h-2zM1053 360h2v2h-2zM1053 373h2v2h-2zM1053 386h2v2h-2zM1053 399h2v2h-2zM1053 412h2v2h-2zM1053 425h2v2h-2zM1053 438h2v2h-2zM1053 451h2v2h-2zM1053 464h2v2h-2zM1053 477h2v2h-2zM1053 490h2v2h-2zM1053 503h2v2h-2zM1053 516h2v2h-2zM1053 529h2v2h-2zM1053 542h2v2h-2zM1053 556h2v2h-2zM1053 569h2v2h-2zM1053 582h2v2h-2zM1053 595h2v2h-2zM1053 608h2v2h-2zM1053 621h2v2h-2zM1053 634h2v2h-2zM1053 647h2v2h-2zM1053 660h2v2h-2zM1053 673h2v2h-2zM1053 686h2v2h-2zM1053 699h2v2h-2zM1053 712h2v2h-2zM1053 725h2v2h-2zM1053 739h2v2h-2zM1053 752h2v2h-2zM1053 765h2v2h-2zM1053 778h2v2h-2zM1053 791h2v2h-2zM1053 804h2v2h-2zM1053 817h2v2h-2zM1053 830h2v2h-2zM1053 843h2v2h-2zM1053 856h2v2h-2zM1053 869h2v2h-2zM1053 882h2v2h-2zM1053 895h2v2h-2zM1066 98h2v2h-2zM1066 111h2v2h-2zM1066 124h2v2h-2zM1066 137h2v2h-2zM1066 150h2v2h-2zM1066 163h2v2h-2zM1066 177h2v2h-2zM1066 190h2v2h-2zM1066 203h2v2h-2zM1066 216h2v2h-2zM1066 229h2v2h-2zM1066 242h2v2h-2zM1066 255h2v2h-2zM1066 268h2v2h-2zM1066 281h2v2h-2zM1066 294h2v2h-2zM1066 307h2v2h-2zM1066 320h2v2h-2zM1066 333h2v2h-2zM1066 346h2v2h-2zM1066 360h2v2h-2zM1066 373h2v2h-2zM1066 386h2v2h-2zM1066 399h2v2h-2zM1066 412h2v2h-2zM1066 425h2v2h-2zM1066 438h2v2h-2zM1066 451h2v2h-2zM1066 464h2v2h-2zM1066 477h2v2h-2zM1066 490h2v2h-2zM1066 503h2v2h-2zM1066 516h2v2h-2zM1066 529h2v2h-2zM1066 542h2v2h-2zM1066 556h2v2h-2zM1066 569h2v2h-2zM1066 582h2v2h-2zM1066 595h2v2h-2zM1066 608h2v2h-2zM1066 621h2v2h-2zM1066 634h2v2h-2zM1066 647h2v2h-2zM1066 660h2v2h-2zM1066 673h2v2h-2zM1066 686h2v2h-2zM1066 699h2v2h-2zM1066 712h2v2h-2zM1066 725h2v2h-2zM1066 739h2v2h-2zM1066 752h2v2h-2zM1066 765h2v2h-2zM1066 778h2v2h-2zM1066 791h2v2h-2zM1066 804h2v2h-2zM1066 817h2v2h-2zM1066 830h2v2h-2zM1066 843h2v2h-2zM1066 856h2v2h-2zM1066 869h2v2h-2zM1066 882h2v2h-2zM1066 895h2v2h-2zM1079 98h2v2h-2zM1079 111h2v2h-2zM1079 124h2v2h-2zM1079 137h2v2h-2zM1079 150h2v2h-2zM1079 163h2v2h-2zM1079 177h2v2h-2zM1079 190h2v2h-2zM1079 203h2v2h-2zM1079 216h2v2h-2zM1079 229h2v2h-2zM1079 242h2v2h-2zM1079 255h2v2h-2zM1079 268h2v2h-2zM1079 281h2v2h-2zM1079 294h2v2h-2zM1079 307h2v2h-2zM1079 320h2v2h-2zM1079 333h2v2h-2zM1079 346h2v2h-2zM1079 360h2v2h-2zM1079 373h2v2h-2zM1079 386h2v2h-2zM1079 399h2v2h-2zM1079 412h2v2h-2zM1079 425h2v2h-2zM1079 438h2v2h-2zM1079 451h2v2h-2zM1079 464h2v2h-2zM1079 477h2v2h-2zM1079 490h2v2h-2zM1079 503h2v2h-2zM1079 516h2v2h-2zM1079 529h2v2h-2zM1079 542h2v2h-2zM1079 556h2v2h-2zM1079 569h2v2h-2zM1079 582h2v2h-2zM1079 595h2v2h-2zM1079 608h2v2h-2zM1079 621h2v2h-2zM1079 634h2v2h-2zM1079 647h2v2h-2zM1079 660h2v2h-2zM1079 673h2v2h-2zM1079 686h2v2h-2zM1079 699h2v2h-2zM1079 712h2v2h-2zM1079 725h2v2h-2zM1079 739h2v2h-2zM1079 752h2v2h-2zM1079 765h2v2h-2zM1079 778h2v2h-2zM1079 791h2v2h-2zM1079 804h2v2h-2zM1079 817h2v2h-2zM1079 830h2v2h-2zM1079 843h2v2h-2zM1079 856h2v2h-2zM1079 869h2v2h-2zM1079 882h2v2h-2zM1079 895h2v2h-2zM1093 98h2v2h-2zM1093 111h2v2h-2zM1093 124h2v2h-2zM1093 137h2v2h-2zM1093 150h2v2h-2zM1093 163h2v2h-2zM1093 177h2v2h-2zM1093 190h2v2h-2zM1093 203h2v2h-2zM1093 216h2v2h-2zM1093 229h2v2h-2zM1093 242h2v2h-2zM1093 255h2v2h-2zM1093 268h2v2h-2zM1093 281h2v2h-2zM1093 294h2v2h-2zM1093 307h2v2h-2zM1093 320h2v2h-2zM1093 333h2v2h-2zM1093 346h2v2h-2zM1093 360h2v2h-2zM1093 373h2v2h-2zM1093 386h2v2h-2zM1093 399h2v2h-2zM1093 412h2v2h-2zM1093 425h2v2h-2zM1093 438h2v2h-2zM1093 451h2v2h-2zM1093 464h2v2h-2zM1093 477h2v2h-2zM1093 490h2v2h-2zM1093 503h2v2h-2zM1093 516h2v2h-2zM1093 529h2v2h-2zM1093 542h2v2h-2zM1093 556h2v2h-2zM1093 569h2v2h-2zM1093 582h2v2h-2zM1093 595h2v2h-2zM1093 608h2v2h-2zM1093 621h2v2h-2zM1093 634h2v2h-2zM1093 647h2v2h-2zM1093 660h2v2h-2zM1093 673h2v2h-2zM1093 686h2v2h-2zM1093 699h2v2h-2zM1093 712h2v2h-2zM1093 725h2v2h-2zM1093 739h2v2h-2zM1093 752h2v2h-2zM1093 765h2v2h-2zM1093 778h2v2h-2zM1093 791h2v2h-2zM1093 804h2v2h-2zM1093 817h2v2h-2zM1093 830h2v2h-2zM1093 843h2v2h-2zM1093 856h2v2h-2zM1093 869h2v2h-2zM1093 882h2v2h-2zM1093 895h2v2h-2zM1106 98h2v2h-2zM1106 111h2v2h-2zM1106 124h2v2h-2zM1106 137h2v2h-2zM1106 150h2v2h-2zM1106 163h2v2h-2zM1106 177h2v2h-2zM1106 190h2v2h-2zM1106 203h2v2h-2zM1106 216h2v2h-2zM1106 229h2v2h-2zM1106 242h2v2h-2zM1106 255h2v2h-2zM1106 268h2v2h-2zM1106 281h2v2h-2zM1106 294h2v2h-2zM1106 307h2v2h-2zM1106 320h2v2h-2zM1106 333h2v2h-2zM1106 346h2v2h-2zM1106 360h2v2h-2zM1106 373h2v2h-2zM1106 386h2v2h-2zM1106 399h2v2h-2zM1106 412h2v2h-2zM1106 425h2v2h-2zM1106 438h2v2h-2zM1106 451h2v2h-2zM1106 464h2v2h-2zM1106 477h2v2h-2zM1106 490h2v2h-2zM1106 503h2v2h-2zM1106 516h2v2h-2zM1106 529h2v2h-2zM1106 542h2v2h-2zM1106 556h2v2h-2zM1106 569h2v2h-2zM1106 582h2v2h-2zM1106 595h2v2h-2zM1106 608h2v2h-2zM1106 621h2v2h-2zM1106 634h2v2h-2zM1106 647h2v2h-2zM1106 660h2v2h-2zM1106 673h2v2h-2zM1106 686h2v2h-2zM1106 699h2v2h-2zM1106 712h2v2h-2zM1106 725h2v2h-2zM1106 739h2v2h-2zM1106 752h2v2h-2zM1106 765h2v2h-2zM1106 778h2v2h-2zM1106 791h2v2h-2zM1106 804h2v2h-2zM1106 817h2v2h-2zM1106 830h2v2h-2zM1106 843h2v2h-2zM1106 856h2v2h-2zM1106 869h2v2h-2zM1106 882h2v2h-2zM1106 895h2v2h-2zM1119 98h2v2h-2zM1119 111h2v2h-2zM1119 124h2v2h-2zM1119 137h2v2h-2zM1119 150h2v2h-2zM1119 163h2v2h-2zM1119 177h2v2h-2zM1119 190h2v2h-2zM1119 203h2v2h-2zM1119 216h2v2h-2zM1119 229h2v2h-2zM1119 242h2v2h-2zM1119 255h2v2h-2zM1119 268h2v2h-2zM1119 281h2v2h-2zM1119 294h2v2h-2zM1119 307h2v2h-2zM1119 320h2v2h-2zM1119 333h2v2h-2zM1119 346h2v2h-2zM1119 360h2v2h-2zM1119 373h2v2h-2zM1119 386h2v2h-2zM1119 399h2v2h-2zM1119 412h2v2h-2zM1119 425h2v2h-2zM1119 438h2v2h-2zM1119 451h2v2h-2zM1119 464h2v2h-2zM1119 477h2v2h-2zM1119 490h2v2h-2zM1119 503h2v2h-2zM1119 516h2v2h-2zM1119 529h2v2h-2zM1119 542h2v2h-2zM1119 556h2v2h-2zM1119 569h2v2h-2zM1119 582h2v2h-2zM1119 595h2v2h-2zM1119 608h2v2h-2zM1119 621h2v2h-2zM1119 634h2v2h-2zM1119 647h2v2h-2zM1119 660h2v2h-2zM1119 673h2v2h-2zM1119 686h2v2h-2zM1119 699h2v2h-2zM1119 712h2v2h-2zM1119 725h2v2h-2zM1119 739h2v2h-2zM1119 752h2v2h-2zM1119 765h2v2h-2zM1119 778h2v2h-2zM1119 791h2v2h-2zM1119 804h2v2h-2zM1119 817h2v2h-2zM1119 830h2v2h-2zM1119 843h2v2h-2zM1119 856h2v2h-2zM1119 869h2v2h-2zM1119 882h2v2h-2zM1119 895h2v2h-2zM1132 98h2v2h-2zM1132 111h2v2h-2zM1132 124h2v2h-2zM1132 137h2v2h-2zM1132 150h2v2h-2zM1132 163h2v2h-2zM1132 177h2v2h-2zM1132 190h2v2h-2zM1132 203h2v2h-2zM1132 216h2v2h-2zM1132 229h2v2h-2zM1132 242h2v2h-2zM1132 255h2v2h-2zM1132 268h2v2h-2zM1132 281h2v2h-2zM1132 294h2v2h-2zM1132 307h2v2h-2zM1132 320h2v2h-2zM1132 333h2v2h-2zM1132 346h2v2h-2zM1132 360h2v2h-2zM1132 373h2v2h-2zM1132 386h2v2h-2zM1132 399h2v2h-2zM1132 412h2v2h-2zM1132 425h2v2h-2zM1132 438h2v2h-2zM1132 451h2v2h-2zM1132 464h2v2h-2zM1132 477h2v2h-2zM1132 490h2v2h-2zM1132 503h2v2h-2zM1132 516h2v2h-2zM1132 529h2v2h-2zM1132 542h2v2h-2zM1132 556h2v2h-2zM1132 569h2v2h-2zM1132 582h2v2h-2zM1132 595h2v2h-2zM1132 608h2v2h-2zM1132 621h2v2h-2zM1132 634h2v2h-2zM1132 647h2v2h-2zM1132 660h2v2h-2zM1132 673h2v2h-2zM1132 686h2v2h-2zM1132 699h2v2h-2zM1132 712h2v2h-2zM1132 725h2v2h-2zM1132 739h2v2h-2zM1132 752h2v2h-2zM1132 765h2v2h-2zM1132 778h2v2h-2zM1132 791h2v2h-2zM1132 804h2v2h-2zM1132 817h2v2h-2zM1132 830h2v2h-2zM1132 843h2v2h-2zM1132 856h2v2h-2zM1132 869h2v2h-2zM1132 882h2v2h-2zM1132 895h2v2h-2zM1145 98h2v2h-2zM1145 111h2v2h-2zM1145 124h2v2h-2zM1145 137h2v2h-2zM1145 150h2v2h-2zM1145 163h2v2h-2zM1145 177h2v2h-2zM1145 190h2v2h-2zM1145 203h2v2h-2zM1145 216h2v2h-2zM1145 229h2v2h-2zM1145 242h2v2h-2zM1145 255h2v2h-2zM1145 268h2v2h-2zM1145 281h2v2h-2zM1145 294h2v2h-2zM1145 307h2v2h-2zM1145 320h2v2h-2zM1145 333h2v2h-2zM1145 346h2v2h-2zM1145 360h2v2h-2zM1145 373h2v2h-2zM1145 386h2v2h-2zM1145 399h2v2h-2zM1145 412h2v2h-2zM1145 425h2v2h-2zM1145 438h2v2h-2zM1145 451h2v2h-2zM1145 464h2v2h-2zM1145 477h2v2h-2zM1145 490h2v2h-2zM1145 503h2v2h-2zM1145 516h2v2h-2zM1145 529h2v2h-2zM1145 542h2v2h-2zM1145 556h2v2h-2zM1145 569h2v2h-2zM1145 582h2v2h-2zM1145 595h2v2h-2zM1145 608h2v2h-2zM1145 621h2v2h-2zM1145 634h2v2h-2zM1145 647h2v2h-2zM1145 660h2v2h-2zM1145 673h2v2h-2zM1145 686h2v2h-2zM1145 699h2v2h-2zM1145 712h2v2h-2zM1145 725h2v2h-2zM1145 739h2v2h-2zM1145 752h2v2h-2zM1145 765h2v2h-2zM1145 778h2v2h-2zM1145 791h2v2h-2zM1145 804h2v2h-2zM1145 817h2v2h-2zM1145 830h2v2h-2zM1145 843h2v2h-2zM1145 856h2v2h-2zM1145 869h2v2h-2zM1145 882h2v2h-2zM1145 895h2v2h-2zM1158 98h2v2h-2zM1158 111h2v2h-2zM1158 124h2v2h-2zM1158 137h2v2h-2zM1158 150h2v2h-2zM1158 163h2v2h-2zM1158 177h2v2h-2zM1158 190h2v2h-2zM1158 203h2v2h-2zM1158 216h2v2h-2zM1158 229h2v2h-2zM1158 242h2v2h-2zM1158 255h2v2h-2zM1158 268h2v2h-2zM1158 281h2v2h-2zM1158 294h2v2h-2zM1158 307h2v2h-2zM1158 320h2v2h-2zM1158 333h2v2h-2zM1158 346h2v2h-2zM1158 360h2v2h-2zM1158 373h2v2h-2zM1158 386h2v2h-2zM1158 399h2v2h-2zM1158 412h2v2h-2zM1158 425h2v2h-2zM1158 438h2v2h-2zM1158 451h2v2h-2zM1158 464h2v2h-2zM1158 477h2v2h-2zM1158 490h2v2h-2zM1158 503h2v2h-2zM1158 516h2v2h-2zM1158 529h2v2h-2zM1158 542h2v2h-2zM1158 556h2v2h-2zM1158 569h2v2h-2zM1158 582h2v2h-2zM1158 595h2v2h-2zM1158 608h2v2h-2zM1158 621h2v2h-2zM1158 634h2v2h-2zM1158 647h2v2h-2zM1158 660h2v2h-2zM1158 673h2v2h-2zM1158 686h2v2h-2zM1158 699h2v2h-2zM1158 712h2v2h-2zM1158 725h2v2h-2zM1158 739h2v2h-2zM1158 752h2v2h-2zM1158 765h2v2h-2zM1158 778h2v2h-2zM1158 791h2v2h-2zM1158 804h2v2h-2zM1158 817h2v2h-2zM1158 830h2v2h-2zM1158 843h2v2h-2zM1158 856h2v2h-2zM1158 869h2v2h-2zM1158 882h2v2h-2zM1158 895h2v2h-2zM1171 98h2v2h-2zM1171 111h2v2h-2zM1171 124h2v2h-2zM1171 137h2v2h-2zM1171 150h2v2h-2zM1171 163h2v2h-2zM1171 177h2v2h-2zM1171 190h2v2h-2zM1171 203h2v2h-2zM1171 216h2v2h-2zM1171 229h2v2h-2zM1171 242h2v2h-2zM1171 255h2v2h-2zM1171 268h2v2h-2zM1171 281h2v2h-2zM1171 294h2v2h-2zM1171 307h2v2h-2zM1171 320h2v2h-2zM1171 333h2v2h-2zM1171 346h2v2h-2zM1171 360h2v2h-2zM1171 373h2v2h-2zM1171 386h2v2h-2zM1171 399h2v2h-2zM1171 412h2v2h-2zM1171 425h2v2h-2zM1171 438h2v2h-2zM1171 451h2v2h-2zM1171 464h2v2h-2zM1171 477h2v2h-2zM1171 490h2v2h-2zM1171 503h2v2h-2zM1171 516h2v2h-2zM1171 529h2v2h-2zM1171 542h2v2h-2zM1171 556h2v2h-2zM1171 569h2v2h-2zM1171 582h2v2h-2zM1171 595h2v2h-2zM1171 608h2v2h-2zM1171 621h2v2h-2zM1171 634h2v2h-2zM1171 647h2v2h-2zM1171 660h2v2h-2zM1171 673h2v2h-2zM1171 686h2v2h-2zM1171 699h2v2h-2zM1171 712h2v2h-2zM1171 725h2v2h-2zM1171 739h2v2h-2zM1171 752h2v2h-2zM1171 765h2v2h-2zM1171 778h2v2h-2zM1171 791h2v2h-2zM1171 804h2v2h-2zM1171 817h2v2h-2zM1171 830h2v2h-2zM1171 843h2v2h-2zM1171 856h2v2h-2zM1171 869h2v2h-2zM1171 882h2v2h-2zM1171 895h2v2h-2zM1184 98h2v2h-2zM1184 111h2v2h-2zM1184 124h2v2h-2zM1184 137h2v2h-2zM1184 150h2v2h-2zM1184 163h2v2h-2zM1184 177h2v2h-2zM1184 190h2v2h-2zM1184 203h2v2h-2zM1184 216h2v2h-2zM1184 229h2v2h-2zM1184 242h2v2h-2zM1184 255h2v2h-2zM1184 268h2v2h-2zM1184 281h2v2h-2zM1184 294h2v2h-2zM1184 307h2v2h-2zM1184 320h2v2h-2zM1184 333h2v2h-2zM1184 346h2v2h-2zM1184 360h2v2h-2zM1184 373h2v2h-2zM1184 386h2v2h-2zM1184 399h2v2h-2zM1184 412h2v2h-2zM1184 425h2v2h-2zM1184 438h2v2h-2zM1184 451h2v2h-2zM1184 464h2v2h-2zM1184 477h2v2h-2zM1184 490h2v2h-2zM1184 503h2v2h-2zM1184 516h2v2h-2zM1184 529h2v2h-2zM1184 542h2v2h-2zM1184 556h2v2h-2zM1184 569h2v2h-2zM1184 582h2v2h-2zM1184 595h2v2h-2zM1184 608h2v2h-2zM1184 621h2v2h-2zM1184 634h2v2h-2zM1184 647h2v2h-2zM1184 660h2v2h-2zM1184 673h2v2h-2zM1184 686h2v2h-2zM1184 699h2v2h-2zM1184 712h2v2h-2zM1184 725h2v2h-2zM1184 739h2v2h-2zM1184 752h2v2h-2zM1184 765h2v2h-2zM1184 778h2v2h-2zM1184 791h2v2h-2zM1184 804h2v2h-2zM1184 817h2v2h-2zM1184 830h2v2h-2zM1184 843h2v2h-2zM1184 856h2v2h-2zM1184 869h2v2h-2zM1184 882h2v2h-2zM1184 895h2v2h-2zM1197 98h2v2h-2zM1197 111h2v2h-2zM1197 124h2v2h-2zM1197 137h2v2h-2zM1197 150h2v2h-2zM1197 163h2v2h-2zM1197 177h2v2h-2zM1197 190h2v2h-2zM1197 203h2v2h-2zM1197 216h2v2h-2zM1197 229h2v2h-2zM1197 242h2v2h-2zM1197 255h2v2h-2zM1197 268h2v2h-2zM1197 281h2v2h-2zM1197 294h2v2h-2zM1197 307h2v2h-2zM1197 320h2v2h-2zM1197 333h2v2h-2zM1197 346h2v2h-2zM1197 360h2v2h-2zM1197 373h2v2h-2zM1197 386h2v2h-2zM1197 399h2v2h-2zM1197 412h2v2h-2zM1197 425h2v2h-2zM1197 438h2v2h-2zM1197 451h2v2h-2zM1197 464h2v2h-2zM1197 477h2v2h-2zM1197 490h2v2h-2zM1197 503h2v2h-2zM1197 516h2v2h-2zM1197 529h2v2h-2zM1197 542h2v2h-2zM1197 556h2v2h-2zM1197 569h2v2h-2zM1197 582h2v2h-2zM1197 595h2v2h-2zM1197 608h2v2h-2zM1197 621h2v2h-2zM1197 634h2v2h-2zM1197 647h2v2h-2zM1197 660h2v2h-2zM1197 673h2v2h-2zM1197 686h2v2h-2zM1197 699h2v2h-2zM1197 712h2v2h-2zM1197 725h2v2h-2zM1197 739h2v2h-2zM1197 752h2v2h-2zM1197 765h2v2h-2zM1197 778h2v2h-2zM1197 791h2v2h-2zM1197 804h2v2h-2zM1197 817h2v2h-2zM1197 830h2v2h-2zM1197 843h2v2h-2zM1197 856h2v2h-2zM1197 869h2v2h-2zM1197 882h2v2h-2zM1197 895h2v2h-2zM1210 98h2v2h-2zM1210 111h2v2h-2zM1210 124h2v2h-2zM1210 137h2v2h-2zM1210 150h2v2h-2zM1210 163h2v2h-2zM1210 177h2v2h-2zM1210 190h2v2h-2zM1210 203h2v2h-2zM1210 216h2v2h-2zM1210 229h2v2h-2zM1210 242h2v2h-2zM1210 255h2v2h-2zM1210 268h2v2h-2zM1210 281h2v2h-2zM1210 294h2v2h-2zM1210 307h2v2h-2zM1210 320h2v2h-2zM1210 333h2v2h-2zM1210 346h2v2h-2zM1210 360h2v2h-2zM1210 373h2v2h-2zM1210 386h2v2h-2zM1210 399h2v2h-2zM1210 412h2v2h-2zM1210 425h2v2h-2zM1210 438h2v2h-2zM1210 451h2v2h-2zM1210 464h2v2h-2zM1210 477h2v2h-2zM1210 490h2v2h-2zM1210 503h2v2h-2zM1210 516h2v2h-2zM1210 529h2v2h-2zM1210 542h2v2h-2zM1210 556h2v2h-2zM1210 569h2v2h-2zM1210 582h2v2h-2zM1210 595h2v2h-2zM1210 608h2v2h-2zM1210 621h2v2h-2zM1210 634h2v2h-2zM1210 647h2v2h-2zM1210 660h2v2h-2zM1210 673h2v2h-2zM1210 686h2v2h-2zM1210 699h2v2h-2zM1210 712h2v2h-2zM1210 725h2v2h-2zM1210 739h2v2h-2zM1210 752h2v2h-2zM1210 765h2v2h-2zM1210 778h2v2h-2zM1210 791h2v2h-2zM1210 804h2v2h-2zM1210 817h2v2h-2zM1210 830h2v2h-2zM1210 843h2v2h-2zM1210 856h2v2h-2zM1210 869h2v2h-2zM1210 882h2v2h-2zM1210 895h2v2h-2zM1223 98h2v2h-2zM1223 111h2v2h-2zM1223 124h2v2h-2zM1223 137h2v2h-2zM1223 150h2v2h-2zM1223 163h2v2h-2zM1223 177h2v2h-2zM1223 190h2v2h-2zM1223 203h2v2h-2zM1223 216h2v2h-2zM1223 229h2v2h-2zM1223 242h2v2h-2zM1223 255h2v2h-2zM1223 268h2v2h-2zM1223 281h2v2h-2zM1223 294h2v2h-2zM1223 307h2v2h-2zM1223 320h2v2h-2zM1223 333h2v2h-2zM1223 346h2v2h-2zM1223 360h2v2h-2zM1223 373h2v2h-2zM1223 386h2v2h-2zM1223 399h2v2h-2zM1223 412h2v2h-2zM1223 425h2v2h-2zM1223 438h2v2h-2zM1223 451h2v2h-2zM1223 464h2v2h-2zM1223 477h2v2h-2zM1223 490h2v2h-2zM1223 503h2v2h-2zM1223 516h2v2h-2zM1223 529h2v2h-2zM1223 542h2v2h-2zM1223 556h2v2h-2zM1223 569h2v2h-2zM1223 582h2v2h-2zM1223 595h2v2h-2zM1223 608h2v2h-2zM1223 621h2v2h-2zM1223 634h2v2h-2zM1223 647h2v2h-2zM1223 660h2v2h-2zM1223 673h2v2h-2zM1223 686h2v2h-2zM1223 699h2v2h-2zM1223 712h2v2h-2zM1223 725h2v2h-2zM1223 739h2v2h-2zM1223 752h2v2h-2zM1223 765h2v2h-2zM1223 778h2v2h-2zM1223 791h2v2h-2zM1223 804h2v2h-2zM1223 817h2v2h-2zM1223 830h2v2h-2zM1223 843h2v2h-2zM1223 856h2v2h-2zM1223 869h2v2h-2zM1223 882h2v2h-2zM1223 895h2v2h-2zM1236 98h2v2h-2zM1236 111h2v2h-2zM1236 124h2v2h-2zM1236 137h2v2h-2zM1236 150h2v2h-2zM1236 163h2v2h-2zM1236 177h2v2h-2zM1236 190h2v2h-2zM1236 203h2v2h-2zM1236 216h2v2h-2zM1236 229h2v2h-2zM1236 242h2v2h-2zM1236 255h2v2h-2zM1236 268h2v2h-2zM1236 281h2v2h-2zM1236 294h2v2h-2zM1236 307h2v2h-2zM1236 320h2v2h-2zM1236 333h2v2h-2zM1236 346h2v2h-2zM1236 360h2v2h-2zM1236 373h2v2h-2zM1236 386h2v2h-2zM1236 399h2v2h-2zM1236 412h2v2h-2zM1236 425h2v2h-2zM1236 438h2v2h-2zM1236 451h2v2h-2zM1236 464h2v2h-2zM1236 477h2v2h-2zM1236 490h2v2h-2zM1236 503h2v2h-2zM1236 516h2v2h-2zM1236 529h2v2h-2zM1236 542h2v2h-2zM1236 556h2v2h-2zM1236 569h2v2h-2zM1236 582h2v2h-2zM1236 595h2v2h-2zM1236 608h2v2h-2zM1236 621h2v2h-2zM1236 634h2v2h-2zM1236 647h2v2h-2zM1236 660h2v2h-2zM1236 673h2v2h-2zM1236 686h2v2h-2zM1236 699h2v2h-2zM1236 712h2v2h-2zM1236 725h2v2h-2zM1236 739h2v2h-2zM1236 752h2v2h-2zM1236 765h2v2h-2zM1236 778h2v2h-2zM1236 791h2v2h-2zM1236 804h2v2h-2zM1236 817h2v2h-2zM1236 830h2v2h-2zM1236 843h2v2h-2zM1236 856h2v2h-2zM1236 869h2v2h-2zM1236 882h2v2h-2zM1236 895h2v2h-2zM1249 98h2v2h-2zM1249 111h2v2h-2zM1249 124h2v2h-2zM1249 137h2v2h-2zM1249 150h2v2h-2zM1249 163h2v2h-2zM1249 177h2v2h-2zM1249 190h2v2h-2zM1249 203h2v2h-2zM1249 216h2v2h-2zM1249 229h2v2h-2zM1249 242h2v2h-2zM1249 255h2v2h-2zM1249 268h2v2h-2zM1249 281h2v2h-2zM1249 294h2v2h-2zM1249 307h2v2h-2zM1249 320h2v2h-2zM1249 333h2v2h-2zM1249 346h2v2h-2zM1249 360h2v2h-2zM1249 373h2v2h-2zM1249 386h2v2h-2zM1249 399h2v2h-2zM1249 412h2v2h-2zM1249 425h2v2h-2zM1249 438h2v2h-2zM1249 451h2v2h-2zM1249 464h2v2h-2zM1249 477h2v2h-2zM1249 490h2v2h-2zM1249 503h2v2h-2zM1249 516h2v2h-2zM1249 529h2v2h-2zM1249 542h2v2h-2zM1249 556h2v2h-2zM1249 569h2v2h-2zM1249 582h2v2h-2zM1249 595h2v2h-2zM1249 608h2v2h-2zM1249 621h2v2h-2zM1249 634h2v2h-2zM1249 647h2v2h-2zM1249 660h2v2h-2zM1249 673h2v2h-2zM1249 686h2v2h-2zM1249 699h2v2h-2zM1249 712h2v2h-2zM1249 725h2v2h-2zM1249 739h2v2h-2zM1249 752h2v2h-2zM1249 765h2v2h-2zM1249 778h2v2h-2zM1249 791h2v2h-2zM1249 804h2v2h-2zM1249 817h2v2h-2zM1249 830h2v2h-2zM1249 843h2v2h-2zM1249 856h2v2h-2zM1249 869h2v2h-2zM1249 882h2v2h-2zM1249 895h2v2h-2zM1262 98h2v2h-2zM1262 111h2v2h-2zM1262 124h2v2h-2zM1262 137h2v2h-2zM1262 150h2v2h-2zM1262 163h2v2h-2zM1262 177h2v2h-2zM1262 190h2v2h-2zM1262 203h2v2h-2zM1262 216h2v2h-2zM1262 229h2v2h-2zM1262 242h2v2h-2zM1262 255h2v2h-2zM1262 268h2v2h-2zM1262 281h2v2h-2zM1262 294h2v2h-2zM1262 307h2v2h-2zM1262 320h2v2h-2zM1262 333h2v2h-2zM1262 346h2v2h-2zM1262 360h2v2h-2zM1262 373h2v2h-2zM1262 386h2v2h-2zM1262 399h2v2h-2zM1262 412h2v2h-2zM1262 425h2v2h-2zM1262 438h2v2h-2zM1262 451h2v2h-2zM1262 464h2v2h-2zM1262 477h2v2h-2zM1262 490h2v2h-2zM1262 503h2v2h-2zM1262 516h2v2h-2zM1262 529h2v2h-2zM1262 542h2v2h-2zM1262 556h2v2h-2zM1262 569h2v2h-2zM1262 582h2v2h-2zM1262 595h2v2h-2zM1262 608h2v2h-2zM1262 621h2v2h-2zM1262 634h2v2h-2zM1262 647h2v2h-2zM1262 660h2v2h-2zM1262 673h2v2h-2zM1262 686h2v2h-2zM1262 699h2v2h-2zM1262 712h2v2h-2zM1262 725h2v2h-2zM1262 739h2v2h-2zM1262 752h2v2h-2zM1262 765h2v2h-2zM1262 778h2v2h-2zM1262 791h2v2h-2zM1262 804h2v2h-2zM1262 817h2v2h-2zM1262 830h2v2h-2zM1262 843h2v2h-2zM1262 856h2v2h-2zM1262 869h2v2h-2zM1262 882h2v2h-2zM1262 895h2v2h-2zM1276 98h2v2h-2zM1276 111h2v2h-2zM1276 124h2v2h-2zM1276 137h2v2h-2zM1276 150h2v2h-2zM1276 163h2v2h-2zM1276 177h2v2h-2zM1276 190h2v2h-2zM1276 203h2v2h-2zM1276 216h2v2h-2zM1276 229h2v2h-2zM1276 242h2v2h-2zM1276 255h2v2h-2zM1276 268h2v2h-2zM1276 281h2v2h-2zM1276 294h2v2h-2zM1276 307h2v2h-2zM1276 320h2v2h-2zM1276 333h2v2h-2zM1276 346h2v2h-2zM1276 360h2v2h-2zM1276 373h2v2h-2zM1276 386h2v2h-2zM1276 399h2v2h-2zM1276 412h2v2h-2zM1276 425h2v2h-2zM1276 438h2v2h-2zM1276 451h2v2h-2zM1276 464h2v2h-2zM1276 477h2v2h-2zM1276 490h2v2h-2zM1276 503h2v2h-2zM1276 516h2v2h-2zM1276 529h2v2h-2zM1276 542h2v2h-2zM1276 556h2v2h-2zM1276 569h2v2h-2zM1276 582h2v2h-2zM1276 595h2v2h-2zM1276 608h2v2h-2zM1276 621h2v2h-2zM1276 634h2v2h-2zM1276 647h2v2h-2zM1276 660h2v2h-2zM1276 673h2v2h-2zM1276 686h2v2h-2zM1276 699h2v2h-2zM1276 712h2v2h-2zM1276 725h2v2h-2zM1276 739h2v2h-2zM1276 752h2v2h-2zM1276 765h2v2h-2zM1276 778h2v2h-2zM1276 791h2v2h-2zM1276 804h2v2h-2zM1276 817h2v2h-2zM1276 830h2v2h-2zM1276 843h2v2h-2zM1276 856h2v2h-2zM1276 869h2v2h-2zM1276 882h2v2h-2zM1276 895h2v2h-2zM1289 98h2v2h-2zM1289 111h2v2h-2zM1289 124h2v2h-2zM1289 137h2v2h-2zM1289 150h2v2h-2zM1289 163h2v2h-2zM1289 177h2v2h-2zM1289 190h2v2h-2zM1289 203h2v2h-2zM1289 216h2v2h-2zM1289 229h2v2h-2zM1289 242h2v2h-2zM1289 255h2v2h-2zM1289 268h2v2h-2zM1289 281h2v2h-2zM1289 294h2v2h-2zM1289 307h2v2h-2zM1289 320h2v2h-2zM1289 333h2v2h-2zM1289 346h2v2h-2zM1289 360h2v2h-2zM1289 373h2v2h-2zM1289 386h2v2h-2zM1289 399h2v2h-2zM1289 412h2v2h-2zM1289 425h2v2h-2zM1289 438h2v2h-2zM1289 451h2v2h-2zM1289 464h2v2h-2zM1289 477h2v2h-2zM1289 490h2v2h-2zM1289 503h2v2h-2zM1289 516h2v2h-2zM1289 529h2v2h-2zM1289 542h2v2h-2zM1289 556h2v2h-2zM1289 569h2v2h-2zM1289 582h2v2h-2zM1289 595h2v2h-2zM1289 608h2v2h-2zM1289 621h2v2h-2zM1289 634h2v2h-2zM1289 647h2v2h-2zM1289 660h2v2h-2zM1289 673h2v2h-2zM1289 686h2v2h-2zM1289 699h2v2h-2zM1289 712h2v2h-2zM1289 725h2v2h-2zM1289 739h2v2h-2zM1289 752h2v2h-2zM1289 765h2v2h-2zM1289 778h2v2h-2zM1289 791h2v2h-2zM1289 804h2v2h-2zM1289 817h2v2h-2zM1289 830h2v2h-2zM1289 843h2v2h-2zM1289 856h2v2h-2zM1289 869h2v2h-2zM1289 882h2v2h-2zM1289 895h2v2h-2zM1302 98h2v2h-2zM1302 111h2v2h-2zM1302 124h2v2h-2zM1302 137h2v2h-2zM1302 150h2v2h-2zM1302 163h2v2h-2zM1302 177h2v2h-2zM1302 190h2v2h-2zM1302 203h2v2h-2zM1302 216h2v2h-2zM1302 229h2v2h-2zM1302 242h2v2h-2zM1302 255h2v2h-2zM1302 268h2v2h-2zM1302 281h2v2h-2zM1302 294h2v2h-2zM1302 307h2v2h-2zM1302 320h2v2h-2zM1302 333h2v2h-2zM1302 346h2v2h-2zM1302 360h2v2h-2zM1302 373h2v2h-2zM1302 386h2v2h-2zM1302 399h2v2h-2zM1302 412h2v2h-2zM1302 425h2v2h-2zM1302 438h2v2h-2zM1302 451h2v2h-2zM1302 464h2v2h-2zM1302 477h2v2h-2zM1302 490h2v2h-2zM1302 503h2v2h-2zM1302 516h2v2h-2zM1302 529h2v2h-2zM1302 542h2v2h-2zM1302 556h2v2h-2zM1302 569h2v2h-2zM1302 582h2v2h-2zM1302 595h2v2h-2zM1302 608h2v2h-2zM1302 621h2v2h-2zM1302 634h2v2h-2zM1302 647h2v2h-2zM1302 660h2v2h-2zM1302 673h2v2h-2zM1302 686h2v2h-2zM1302 699h2v2h-2zM1302 712h2v2h-2zM1302 725h2v2h-2zM1302 739h2v2h-2zM1302 752h2v2h-2zM1302 765h2v2h-2zM1302 778h2v2h-2zM1302 791h2v2h-2zM1302 804h2v2h-2zM1302 817h2v2h-2zM1302 830h2v2h-2zM1302 843h2v2h-2zM1302 856h2v2h-2zM1302 869h2v2h-2zM1302 882h2v2h-2zM1302 895h2v2h-2zM1315 98h2v2h-2zM1315 111h2v2h-2zM1315 124h2v2h-2zM1315 137h2v2h-2zM1315 150h2v2h-2zM1315 163h2v2h-2zM1315 177h2v2h-2zM1315 190h2v2h-2zM1315 203h2v2h-2zM1315 216h2v2h-2zM1315 229h2v2h-2zM1315 242h2v2h-2zM1315 255h2v2h-2zM1315 268h2v2h-2zM1315 281h2v2h-2zM1315 294h2v2h-2zM1315 307h2v2h-2zM1315 320h2v2h-2zM1315 333h2v2h-2zM1315 346h2v2h-2zM1315 360h2v2h-2zM1315 373h2v2h-2zM1315 386h2v2h-2zM1315 399h2v2h-2zM1315 412h2v2h-2zM1315 425h2v2h-2zM1315 438h2v2h-2zM1315 451h2v2h-2zM1315 464h2v2h-2zM1315 477h2v2h-2zM1315 490h2v2h-2zM1315 503h2v2h-2zM1315 516h2v2h-2zM1315 529h2v2h-2zM1315 542h2v2h-2zM1315 556h2v2h-2zM1315 569h2v2h-2zM1315 582h2v2h-2zM1315 595h2v2h-2zM1315 608h2v2h-2zM1315 621h2v2h-2zM1315 634h2v2h-2zM1315 647h2v2h-2zM1315 660h2v2h-2zM1315 673h2v2h-2zM1315 686h2v2h-2zM1315 699h2v2h-2zM1315 712h2v2h-2zM1315 725h2v2h-2zM1315 739h2v2h-2zM1315 752h2v2h-2zM1315 765h2v2h-2zM1315 778h2v2h-2zM1315 791h2v2h-2zM1315 804h2v2h-2zM1315 817h2v2h-2zM1315 830h2v2h-2zM1315 843h2v2h-2zM1315 856h2v2h-2zM1315 869h2v2h-2zM1315 882h2v2h-2zM1315 895h2v2h-2z" fill="#d3d7de"/></svg>
<div class="a" style="left:1322px;top:92px;width:263px;height:805px;background:#fff;border-left:1px solid #e6eaf0"></div>
<div class="a" style="left:1323px;top:125px;width:262px;height:1px;background:#e8ecf1"></div>
<div class="a" style="left:1323px;top:156.5px;width:262px;height:1.0px;background:#e8ecf1"></div>
<div class="t" style="left:1335.4px;top:104.00px;font-size:10px;font-weight:700;color:#1e293b;">Configuration</div>
<div class="t" style="left:1414.0px;top:104.00px;font-size:10.3px;font-weight:400;color:#64748b;">Scene assets</div>
<div class="t" style="left:1489.6px;top:103.00px;font-size:10.5px;font-weight:400;color:#64748b;">Simulation</div>
<div class="t" style="left:1335.4px;top:136.00px;font-size:10px;font-weight:700;color:#1e293b;">Download configuration</div>
<svg class="a" style="left:1558.5px;top:136px;" width="11" height="11.5" viewBox="2 2 20 20"><g fill="none" stroke="#334155" stroke-width="2.2" stroke-linecap="round" stroke-linejoin="round"><path d="M21 15v4a2 2 0 0 1-2 2H5a2 2 0 0 1-2-2v-4"/><polyline points="7 10 12 15 17 10"/><line x1="12" y1="15" x2="12" y2="3"/></g></svg>
<svg class="a" style="left:30.6px;top:234px;" width="6.1" height="4" viewBox="0 0 6.1 4"><path d="M0 0H6.1L3.05 4Z" fill="#475569"/></svg>
<svg class="a" style="left:46.7px;top:231.8px;" width="10" height="8.8" viewBox="0 0 10 8.8"><g fill="none" stroke="#64748b" stroke-width="1"><rect x="0.5" y="0.5" width="3.6" height="3.1" rx="0.5"/><rect x="0.5" y="5.2" width="3.6" height="3.1" rx="0.5"/><path d="M7.6 0.3V8.2M5.7 6.3 L7.6 8.2 L9.5 6.3" stroke-linecap="round" stroke-linejoin="round"/></g></svg>
<div class="t" style="left:64.9px;top:230.00px;font-size:10.5px;font-weight:400;color:#334155;">Main program</div>
<div class="a" style="left:33.3px;top:249px;width:1.5px;height:156px;background:#e9eef5"></div>
<svg class="a" style="left:64.9px;top:257.0px;" width="10" height="10" viewBox="0 0 10 10"><g fill="none" stroke="#64748b" stroke-width="1.1"><path d="M2.6 7.4 L7.4 2.6"/><circle cx="1.8" cy="8.2" r="1.2"/><circle cx="8.2" cy="1.8" r="1.2" fill="#64748b"/></g></svg>
<div class="t" style="left:82.9px;top:256.00px;font-size:10.5px;font-weight:400;color:#334155;">Set actuator speed to 250 mm/...</div>
<svg class="a" style="left:64.9px;top:283.0px;" width="10" height="10" viewBox="0 0 10 10"><g fill="none" stroke="#64748b" stroke-width="1.1"><path d="M2.6 7.4 L7.4 2.6"/><circle cx="1.8" cy="8.2" r="1.2"/><circle cx="8.2" cy="1.8" r="1.2" fill="#64748b"/></g></svg>
<div class="t" style="left:82.9px;top:282.00px;font-size:10.5px;font-weight:400;color:#334155;">Set robot payload to 5 kg</div>
<svg class="a" style="left:64.1px;top:308.0px;" width="11.2" height="11.2" viewBox="0 0 12 12"><g fill="none" stroke="#64748b" stroke-width="0.9" stroke-linejoin="round"><path d="M9.97 7.65 L9.91 7.80 L9.83 7.95 L9.75 8.10 L9.67 8.25 L9.58 8.39 L9.48 8.53 L9.83 9.02 L10.11 9.51 L9.97 9.67 L9.82 9.82 L9.67 9.97 L9.51 10.11 L9.02 9.83 L8.53 9.48 L8.39 9.58 L8.25 9.67 L8.10 9.75 L7.95 9.83 L7.80 9.91 L7.65 9.97 L7.49 10.03 L7.33 10.09 L7.17 10.14 L7.00 10.18 L6.84 10.22 L6.67 10.25 L6.57 10.85 L6.42 11.38 L6.21 11.40 L6.00 11.40 L5.79 11.40 L5.58 11.38 L5.43 10.85 L5.33 10.25 L5.16 10.22 L5.00 10.18 L4.83 10.14 L4.67 10.09 L4.51 10.03 L4.35 9.97 L4.20 9.91 L4.05 9.83 L3.90 9.75 L3.75 9.67 L3.61 9.58 L3.47 9.48 L2.98 9.83 L2.49 10.11 L2.33 9.97 L2.18 9.82 L2.03 9.67 L1.89 9.51 L2.17 9.02 L2.52 8.53 L2.42 8.39 L2.33 8.25 L2.25 8.10 L2.17 7.95 L2.09 7.80 L2.03 7.65 L1.97 7.49 L1.91 7.33 L1.86 7.17 L1.82 7.00 L1.78 6.84 L1.75 6.67 L1.15 6.57 L0.62 6.42 L0.60 6.21 L0.60 6.00 L0.60 5.79 L0.62 5.58 L1.15 5.43 L1.75 5.33 L1.78 5.16 L1.82 5.00 L1.86 4.83 L1.91 4.67 L1.97 4.51 L2.03 4.35 L2.09 4.20 L2.17 4.05 L2.25 3.90 L2.33 3.75 L2.42 3.61 L2.52 3.47 L2.17 2.98 L1.89 2.49 L2.03 2.33 L2.18 2.18 L2.33 2.03 L2.49 1.89 L2.98 2.17 L3.47 2.52 L3.61 2.42 L3.75 2.33 L3.90 2.25 L4.05 2.17 L4.20 2.09 L4.35 2.03 L4.51 1.97 L4.67 1.91 L4.83 1.86 L5.00 1.82 L5.16 1.78 L5.33 1.75 L5.43 1.15 L5.58 0.62 L5.79 0.60 L6.00 0.60 L6.21 0.60 L6.42 0.62 L6.57 1.15 L6.67 1.75 L6.84 1.78 L7.00 1.82 L7.17 1.86 L7.33 1.91 L7.49 1.97 L7.65 2.03 L7.80 2.09 L7.95 2.17 L8.10 2.25 L8.25 2.33 L8.39 2.42 L8.53 2.52 L9.02 2.17 L9.51 1.89 L9.67 2.03 L9.82 2.18 L9.97 2.33 L10.11 2.49 L9.83 2.98 L9.48 3.47 L9.58 3.61 L9.67 3.75 L9.75 3.90 L9.83 4.05 L9.91 4.20 L9.97 4.35 L10.03 4.51 L10.09 4.67 L10.14 4.83 L10.18 5.00 L10.22 5.16 L10.25 5.33 L10.85 5.43 L11.38 5.58 L11.40 5.79 L11.40 6.00 L11.40 6.21 L11.38 6.42 L10.85 6.57 L10.25 6.67 L10.22 6.84 L10.18 7.00 L10.14 7.17 L10.09 7.33 L10.03 7.49Z"/><circle cx="6" cy="6" r="1.7"/></g><path d="M8.6 8.3 L11.6 10.1 L8.6 11.9Z" fill="#fff" stroke="#64748b" stroke-width="0.9" stroke-linejoin="round"/></svg>
<div class="t" style="left:82.9px;top:308.00px;font-size:10.5px;font-weight:400;color:#334155;">Wait for MQTT message</div>
<svg class="a" style="left:64.6px;top:333.8px;" width="10.4" height="11.0" viewBox="0 0 10.4 11"><g fill="none" stroke="#64748b" stroke-width="0.9" stroke-linejoin="round"><path d="M0.8 10.6 H8.9 L8.4 9.5 H1.3 Z"/><path d="M2.2 9.5 L0.7 4.8 L2.9 4 L5.5 9.5"/><path d="M0.6 4.6 L6.2 0.8 L7.8 2.6 L2.3 5.8"/><path d="M6.2 0.7 L8.3 0.4 L10 2.8 L9 4.5 L7.5 3.1"/></g></svg>
<div class="t" style="left:82.9px;top:334.00px;font-size:10.5px;font-weight:400;color:#334155;">Robot move Relative</div>
<svg class="a" style="left:64.9px;top:361.0px;" width="10" height="10" viewBox="0 0 10 10"><g fill="none" stroke="#64748b" stroke-width="1.1"><path d="M2.6 7.4 L7.4 2.6"/><circle cx="1.8" cy="8.2" r="1.2"/><circle cx="8.2" cy="1.8" r="1.2" fill="#64748b"/></g></svg>
<div class="t" style="left:82.9px;top:360.00px;font-size:10.5px;font-weight:400;color:#334155;">Move actuator to 500 mm</div>
<svg class="a" style="left:64.1px;top:386.0px;" width="11.2" height="11.2" viewBox="0 0 12 12"><g fill="none" stroke="#64748b" stroke-width="0.9" stroke-linejoin="round"><path d="M9.97 7.65 L9.91 7.80 L9.83 7.95 L9.75 8.10 L9.67 8.25 L9.58 8.39 L9.48 8.53 L9.83 9.02 L10.11 9.51 L9.97 9.67 L9.82 9.82 L9.67 9.97 L9.51 10.11 L9.02 9.83 L8.53 9.48 L8.39 9.58 L8.25 9.67 L8.10 9.75 L7.95 9.83 L7.80 9.91 L7.65 9.97 L7.49 10.03 L7.33 10.09 L7.17 10.14 L7.00 10.18 L6.84 10.22 L6.67 10.25 L6.57 10.85 L6.42 11.38 L6.21 11.40 L6.00 11.40 L5.79 11.40 L5.58 11.38 L5.43 10.85 L5.33 10.25 L5.16 10.22 L5.00 10.18 L4.83 10.14 L4.67 10.09 L4.51 10.03 L4.35 9.97 L4.20 9.91 L4.05 9.83 L3.90 9.75 L3.75 9.67 L3.61 9.58 L3.47 9.48 L2.98 9.83 L2.49 10.11 L2.33 9.97 L2.18 9.82 L2.03 9.67 L1.89 9.51 L2.17 9.02 L2.52 8.53 L2.42 8.39 L2.33 8.25 L2.25 8.10 L2.17 7.95 L2.09 7.80 L2.03 7.65 L1.97 7.49 L1.91 7.33 L1.86 7.17 L1.82 7.00 L1.78 6.84 L1.75 6.67 L1.15 6.57 L0.62 6.42 L0.60 6.21 L0.60 6.00 L0.60 5.79 L0.62 5.58 L1.15 5.43 L1.75 5.33 L1.78 5.16 L1.82 5.00 L1.86 4.83 L1.91 4.67 L1.97 4.51 L2.03 4.35 L2.09 4.20 L2.17 4.05 L2.25 3.90 L2.33 3.75 L2.42 3.61 L2.52 3.47 L2.17 2.98 L1.89 2.49 L2.03 2.33 L2.18 2.18 L2.33 2.03 L2.49 1.89 L2.98 2.17 L3.47 2.52 L3.61 2.42 L3.75 2.33 L3.90 2.25 L4.05 2.17 L4.20 2.09 L4.35 2.03 L4.51 1.97 L4.67 1.91 L4.83 1.86 L5.00 1.82 L5.16 1.78 L5.33 1.75 L5.43 1.15 L5.58 0.62 L5.79 0.60 L6.00 0.60 L6.21 0.60 L6.42 0.62 L6.57 1.15 L6.67 1.75 L6.84 1.78 L7.00 1.82 L7.17 1.86 L7.33 1.91 L7.49 1.97 L7.65 2.03 L7.80 2.09 L7.95 2.17 L8.10 2.25 L8.25 2.33 L8.39 2.42 L8.53 2.52 L9.02 2.17 L9.51 1.89 L9.67 2.03 L9.82 2.18 L9.97 2.33 L10.11 2.49 L9.83 2.98 L9.48 3.47 L9.58 3.61 L9.67 3.75 L9.75 3.90 L9.83 4.05 L9.91 4.20 L9.97 4.35 L10.03 4.51 L10.09 4.67 L10.14 4.83 L10.18 5.00 L10.22 5.16 L10.25 5.33 L10.85 5.43 L11.38 5.58 L11.40 5.79 L11.40 6.00 L11.40 6.21 L11.38 6.42 L10.85 6.57 L10.25 6.67 L10.22 6.84 L10.18 7.00 L10.14 7.17 L10.09 7.33 L10.03 7.49Z"/><circle cx="6" cy="6" r="1.7"/></g><path d="M8.6 8.3 L11.6 10.1 L8.6 11.9Z" fill="#fff" stroke="#64748b" stroke-width="0.9" stroke-linejoin="round"/></svg>
<div class="t" style="left:82.9px;top:386.00px;font-size:10.5px;font-weight:400;color:#334155;">Loop forever</div>
<svg class="a" style="left:49.9px;top:389.8px;" width="4.3" height="6" viewBox="0 0 4.3 6"><path d="M0 0L4.3 3.0L0 6Z" fill="#475569"/></svg>
<svg class="a" style="left:1336px;top:165.3px;" width="11.2" height="10.2" viewBox="0 0 11.2 10.2"><g fill="none" stroke="#64748b" stroke-width="1"><rect x="1.6" y="1.4" width="8" height="7.4" rx="1.6"/><rect x="3.9" y="3.4" width="3.4" height="3.4" rx="0.6"/><path d="M0 3.5H1.6M0 6.6H1.6M9.6 3.5H11.2M9.6 6.6H11.2M3.6 0V1.4M7.6 0V1.4M3.6 8.8V10.2M7.6 8.8V10.2"/></g></svg>
<div class="t" style="left:1354.9px;top:165.00px;font-size:10.5px;font-weight:400;color:#334155;">MachineMotion AI</div>
<svg class="a" style="left:1354.5px;top:191.3px;" width="10.3" height="10.89423076923077" viewBox="0 0 10.4 11"><g fill="none" stroke="#64748b" stroke-width="0.9" stroke-linejoin="round"><path d="M0.8 10.6 H8.9 L8.4 9.5 H1.3 Z"/><path d="M2.2 9.5 L0.7 4.8 L2.9 4 L5.5 9.5"/><path d="M0.6 4.6 L6.2 0.8 L7.8 2.6 L2.3 5.8"/><path d="M6.2 0.7 L8.3 0.4 L10 2.8 L9 4.5 L7.5 3.1"/></g></svg>
<div class="t" style="left:1372.6px;top:192.00px;font-size:10.5px;font-weight:400;color:#334155;letter-spacing:-0.25px">UR10 Robot</div>
<svg class="a" style="left:1354.5px;top:219px;" width="10.2" height="8.4" viewBox="0 0 10.2 8.4"><g fill="none" stroke="#64748b" stroke-width="1" stroke-linejoin="round"><path d="M0.5 2.6H3.2V5.8H0.5Z"/><path d="M3.2 4.2H5"/><path d="M9.8 1 A3.2 3.2 0 0 0 5 2.2 V6.2 A3.2 3.2 0 0 0 9.8 7.4"/></g></svg>
<div class="t" style="left:1372.6px;top:218.00px;font-size:10.5px;font-weight:400;color:#334155;">Smooth Robotics SmoothTool</div>
<svg class="a" style="left:1338.9px;top:247.3px;" width="5.6" height="3.8" viewBox="0 0 5.6 3.8"><path d="M0 0H5.6L2.8 3.8Z" fill="#475569"/></svg>
<svg class="a" style="left:1354.5px;top:244px;" width="10.4" height="10.4" viewBox="0 0 10.5 10.5"><g fill="none" stroke="#64748b" stroke-width="1.0" stroke-linejoin="round"><path d="M0.9 8.3 L5.6 3.6 L7.4 5.4 L2.7 10.1 Z"/><path d="M2.2 7.0 L4 8.8" /><path d="M6.3 4.3 L8.2 2.4"/><circle cx="8.9" cy="1.7" r="1.1"/></g></svg>
<div class="t" style="left:1372.6px;top:244.00px;font-size:10.5px;font-weight:400;color:#334155;letter-spacing:-0.1px">7th Axis Range Extender</div>
<svg class="a" style="left:1372px;top:271.3px;" width="11.5" height="7.2" viewBox="0 0 11.5 7.2"><g fill="none" stroke="#64748b" stroke-width="1" stroke-linejoin="round"><rect x="0.5" y="0.5" width="8.3" height="6.2" rx="1"/><path d="M3.2 0.5V6.7M5.8 0.5V6.7M3.2 3.6H5.8"/><path d="M8.8 2 H10.2 A1 1 0 0 1 11 3 V4.2 A1 1 0 0 1 10.2 5.2 H8.8"/></g></svg>
<div class="t" style="left:1390.6px;top:270.00px;font-size:10.5px;font-weight:400;color:#334155;">Motor</div>
<div class="a" style="left:285px;top:134px;width:505px;height:86px;background:#fff;border:1px solid #e5e9f0;border-radius:5px"></div>
<div class="a" style="left:286px;top:160px;width:503px;height:1px;background:#edf0f5"></div>
<svg class="a" style="left:294.7px;top:145.2px;" width="7.5" height="4.5" viewBox="0 0 7.5 4.5"><path d="M0.6 0.6 L3.75 3.8 L6.9 0.6" fill="none" stroke="#475569" stroke-width="1.2" stroke-linecap="round" stroke-linejoin="round"/></svg>
<svg class="a" style="left:309.8px;top:142.5px;" width="10.2" height="10.2" viewBox="0 0 10.2 10.2"><g stroke="#f59e0b" fill="#f59e0b"><path d="M2 8.2 L8.2 2" stroke-width="1.3" fill="none"/><circle cx="1.7" cy="8.5" r="1.6" stroke-width="0"/><circle cx="8.5" cy="1.7" r="1.6" stroke-width="0"/></g></svg>
<div class="t" style="left:325.1px;top:143.00px;font-size:10px;font-weight:700;color:#0f172a;">Set motion parameters</div>
<div class="a" style="left:767.5px;top:146.4px;width:2.0px;height:2.0px;background:#1e293b;border-radius:50%"></div>
<div class="a" style="left:771.6px;top:146.4px;width:2.0px;height:2.0px;background:#1e293b;border-radius:50%"></div>
<div class="a" style="left:775.7px;top:146.4px;width:2.0px;height:2.0px;background:#1e293b;border-radius:50%"></div>
<div class="t" style="left:295.5px;top:172.00px;font-size:10px;font-weight:700;color:#1e293b;">Axis</div>
<div class="t" style="left:459.8px;top:172.00px;font-size:10px;font-weight:700;color:#1e293b;">Speed</div>
<div class="t" style="left:624.2px;top:172.00px;font-size:10px;font-weight:700;color:#1e293b;">Acceleration</div>
<div class="a" style="left:294.5px;top:186.3px;width:156.0px;height:20.69999999999999px;background:#fff;border:1px solid #e2e8f0;border-radius:3px;box-shadow:0 1px 1.5px rgba(15,23,42,0.04)"></div>
<svg class="a" style="left:299.8px;top:191.8px;" width="10.2" height="10.2" viewBox="0 0 10.5 10.5"><g fill="none" stroke="#64748b" stroke-width="1.0" stroke-linejoin="round"><path d="M0.9 8.3 L5.6 3.6 L7.4 5.4 L2.7 10.1 Z"/><path d="M2.2 7.0 L4 8.8" /><path d="M6.3 4.3 L8.2 2.4"/><circle cx="8.9" cy="1.7" r="1.1"/></g></svg>
<div class="t" style="left:316.7px;top:192.00px;font-size:10.4px;font-weight:400;color:#334155;">Actuator</div>
<svg class="a" style="left:436.5px;top:194.5px;" width="7.6" height="4.4" viewBox="0 0 7.6 4.4"><path d="M0.6 0.6 L3.8 3.8 L7 0.6" fill="none" stroke="#334155" stroke-width="1.2" stroke-linecap="round" stroke-linejoin="round"/></svg>
<div class="a" style="left:459.3px;top:186.3px;width:155.7px;height:20.69999999999999px;background:#fff;border:1px solid #e2e8f0;border-radius:3px;box-shadow:0 1px 1.5px rgba(15,23,42,0.04)"></div>
<div class="t" style="left:466.5px;top:192.00px;font-size:10.4px;font-weight:400;color:#334155;">250</div>
<div class="t" style="right:989.0px;top:193.00px;font-size:8.6px;font-weight:400;color:#94a3b8;">mm/s</div>
<div class="a" style="left:623.7px;top:186.3px;width:156.0999999999999px;height:20.69999999999999px;background:#fff;border:1px solid #e2e8f0;border-radius:3px;box-shadow:0 1px 1.5px rgba(15,23,42,0.04)"></div>
<div class="t" style="left:631.4px;top:192.00px;font-size:10.4px;font-weight:400;color:#334155;">1000</div>
<div class="t" style="right:824.2px;top:193.00px;font-size:8.6px;font-weight:400;color:#94a3b8;">mm/s&#178;</div>
<div class="a" style="left:285px;top:229.4px;width:505px;height:84.6px;background:#fff;border:1px solid #e5e9f0;border-radius:5px"></div>
<div class="a" style="left:286px;top:255px;width:503px;height:1px;background:#edf0f5"></div>
<svg class="a" style="left:294.7px;top:240.6px;" width="7.5" height="4.5" viewBox="0 0 7.5 4.5"><path d="M0.6 0.6 L3.75 3.8 L6.9 0.6" fill="none" stroke="#475569" stroke-width="1.2" stroke-linecap="round" stroke-linejoin="round"/></svg>
<svg class="a" style="left:309.9px;top:237.0px;" width="10.4" height="11" viewBox="0 0 10.4 11"><g fill="#f59e0b"><path d="M0.8 10.8 H8.9 L8.4 9.5 H1.3 Z"/><path d="M2.2 9.6 L0.5 4.6 L2.9 3.8 L5.6 9.6 Z"/><path d="M0.4 4.5 L6.2 0.6 L7.9 2.5 L2.2 5.9 Z"/><path d="M6 0.5 L8.3 0.1 L10.3 2.8 L9.1 4.7 L7.3 3.1 Z"/></g><path d="M2.2 8.6 L1.6 5.5" stroke="#fcd34d" stroke-width="0.8"/></svg>
<div class="t" style="left:325.1px;top:238.00px;font-size:10px;font-weight:700;color:#0f172a;">Set robot payload</div>
<div class="a" style="left:767.5px;top:241.8px;width:2.0px;height:2.0px;background:#1e293b;border-radius:50%"></div>
<div class="a" style="left:771.6px;top:241.8px;width:2.0px;height:2.0px;background:#1e293b;border-radius:50%"></div>
<div class="a" style="left:775.7px;top:241.8px;width:2.0px;height:2.0px;background:#1e293b;border-radius:50%"></div>
<div class="t" style="left:295.5px;top:268.00px;font-size:10px;font-weight:700;color:#1e293b;">Payload</div>
<div class="a" style="left:294.5px;top:281.5px;width:156.0px;height:20.0px;background:#fff;border:1px solid #e2e8f0;border-radius:3px;box-shadow:0 1px 1.5px rgba(15,23,42,0.04)"></div>
<div class="t" style="left:301.8px;top:287.00px;font-size:10.4px;font-weight:400;color:#334155;">5</div>
<div class="t" style="right:1153.5px;top:288.00px;font-size:8.6px;font-weight:400;color:#94a3b8;">kg</div>
<div class="a" style="left:285px;top:324.3px;width:505px;height:156.5px;background:#fff;border:1px solid #e5e9f0;border-radius:5px"></div>
<div class="a" style="left:286px;top:349.6px;width:503px;height:1.0px;background:#edf0f5"></div>
<svg class="a" style="left:294.7px;top:335.0px;" width="7.5" height="4.5" viewBox="0 0 7.5 4.5"><path d="M0.6 0.6 L3.75 3.8 L6.9 0.6" fill="none" stroke="#475569" stroke-width="1.2" stroke-linecap="round" stroke-linejoin="round"/></svg>
<svg class="a" style="left:309.2px;top:331.7px;" width="11.2" height="11.2" viewBox="0 0 12 12"><g stroke="#1fae7a" stroke-width="1.1" stroke-linejoin="round"><path d="M10.07 7.68 L10.00 7.84 L9.92 8.00 L9.84 8.15 L9.75 8.30 L9.66 8.44 L9.56 8.59 L9.95 9.12 L10.26 9.64 L10.11 9.80 L9.96 9.96 L9.80 10.11 L9.64 10.26 L9.12 9.95 L8.59 9.56 L8.44 9.66 L8.30 9.75 L8.15 9.84 L8.00 9.92 L7.84 10.00 L7.68 10.07 L7.52 10.13 L7.36 10.18 L7.19 10.23 L7.03 10.28 L6.86 10.32 L6.69 10.35 L6.59 11.00 L6.44 11.58 L6.22 11.60 L6.00 11.60 L5.78 11.60 L5.56 11.58 L5.41 11.00 L5.31 10.35 L5.14 10.32 L4.97 10.28 L4.81 10.23 L4.64 10.18 L4.48 10.13 L4.32 10.07 L4.16 10.00 L4.00 9.92 L3.85 9.84 L3.70 9.75 L3.56 9.66 L3.41 9.56 L2.88 9.95 L2.36 10.26 L2.20 10.11 L2.04 9.96 L1.89 9.80 L1.74 9.64 L2.05 9.12 L2.44 8.59 L2.34 8.44 L2.25 8.30 L2.16 8.15 L2.08 8.00 L2.00 7.84 L1.93 7.68 L1.87 7.52 L1.82 7.36 L1.77 7.19 L1.72 7.03 L1.68 6.86 L1.65 6.69 L1.00 6.59 L0.42 6.44 L0.40 6.22 L0.40 6.00 L0.40 5.78 L0.42 5.56 L1.00 5.41 L1.65 5.31 L1.68 5.14 L1.72 4.97 L1.77 4.81 L1.82 4.64 L1.87 4.48 L1.93 4.32 L2.00 4.16 L2.08 4.00 L2.16 3.85 L2.25 3.70 L2.34 3.56 L2.44 3.41 L2.05 2.88 L1.74 2.36 L1.89 2.20 L2.04 2.04 L2.20 1.89 L2.36 1.74 L2.88 2.05 L3.41 2.44 L3.56 2.34 L3.70 2.25 L3.85 2.16 L4.00 2.08 L4.16 2.00 L4.32 1.93 L4.48 1.87 L4.64 1.82 L4.81 1.77 L4.97 1.72 L5.14 1.68 L5.31 1.65 L5.41 1.00 L5.56 0.42 L5.78 0.40 L6.00 0.40 L6.22 0.40 L6.44 0.42 L6.59 1.00 L6.69 1.65 L6.86 1.68 L7.03 1.72 L7.19 1.77 L7.36 1.82 L7.52 1.87 L7.68 1.93 L7.84 2.00 L8.00 2.08 L8.15 2.16 L8.30 2.25 L8.44 2.34 L8.59 2.44 L9.12 2.05 L9.64 1.74 L9.80 1.89 L9.96 2.04 L10.11 2.20 L10.26 2.36 L9.95 2.88 L9.56 3.41 L9.66 3.56 L9.75 3.70 L9.84 3.85 L9.92 4.00 L10.00 4.16 L10.07 4.32 L10.13 4.48 L10.18 4.64 L10.23 4.81 L10.28 4.97 L10.32 5.14 L10.35 5.31 L11.00 5.41 L11.58 5.56 L11.60 5.78 L11.60 6.00 L11.60 6.22 L11.58 6.44 L11.00 6.59 L10.35 6.69 L10.32 6.86 L10.28 7.03 L10.23 7.19 L10.18 7.36 L10.13 7.52Z" fill="#c8f5df"/><circle cx="6" cy="6" r="1.9" fill="none" stroke-width="1.2"/></g><path d="M8.2 8.0 L12.2 10.3 L8.2 12.6Z" fill="#1fae7a" stroke="#ffffff" stroke-width="0.9" stroke-linejoin="round"/></svg>
<div class="t" style="left:325.1px;top:333.00px;font-size:10px;font-weight:700;color:#0f172a;">Wait for</div>
<div class="a" style="left:767.5px;top:336.2px;width:2.0px;height:2.0px;background:#1e293b;border-radius:50%"></div>
<div class="a" style="left:771.6px;top:336.2px;width:2.0px;height:2.0px;background:#1e293b;border-radius:50%"></div>
<div class="a" style="left:775.7px;top:336.2px;width:2.0px;height:2.0px;background:#1e293b;border-radius:50%"></div>
<div class="t" style="left:295.5px;top:362.00px;font-size:10px;font-weight:700;color:#1e293b;">Wait for</div>
<div class="t" style="left:542.5px;top:362.00px;font-size:10px;font-weight:700;color:#1e293b;">Topic</div>
<div class="a" style="left:294.5px;top:376px;width:238.10000000000002px;height:20.30000000000001px;background:#fff;border:1px solid #e2e8f0;border-radius:3px;box-shadow:0 1px 1.5px rgba(15,23,42,0.04)"></div>
<div class="t" style="left:301.6px;top:382.00px;font-size:10.4px;font-weight:400;color:#334155;">MQTT message</div>
<svg class="a" style="left:518.6px;top:384.2px;" width="7.6" height="4.4" viewBox="0 0 7.6 4.4"><path d="M0.6 0.6 L3.8 3.8 L7 0.6" fill="none" stroke="#334155" stroke-width="1.2" stroke-linecap="round" stroke-linejoin="round"/></svg>
<div class="a" style="left:541.6px;top:376px;width:237.69999999999993px;height:20.30000000000001px;background:#fff;border:1px solid #e2e8f0;border-radius:3px;box-shadow:0 1px 1.5px rgba(15,23,42,0.04)"></div>
<div class="t" style="left:548.3px;top:382.00px;font-size:10.4px;font-weight:400;color:#334155;">Start_act</div>
<div class="t" style="left:295.5px;top:411.00px;font-size:10px;font-weight:700;color:#1e293b;">Message</div>
<div class="t" style="left:542.5px;top:411.00px;font-size:10px;font-weight:700;color:#1e293b;">Assign message to</div>
<div class="a" style="left:294.5px;top:425.2px;width:238.10000000000002px;height:20.400000000000034px;background:#fff;border:1px solid #e2e8f0;border-radius:3px;box-shadow:0 1px 1.5px rgba(15,23,42,0.04)"></div>
<div class="a" style="left:541.6px;top:425.2px;width:237.69999999999993px;height:20.400000000000034px;background:#fff;border:1px solid #e2e8f0;border-radius:3px;box-shadow:0 1px 1.5px rgba(15,23,42,0.04)"></div>
<div class="t" style="left:546.0px;top:431.00px;font-size:10px;font-weight:400;color:#94a3b8;letter-spacing:0.3px">(x)</div>
<div class="t" style="left:563.2px;top:431.00px;font-size:10.4px;font-weight:400;color:#334155;letter-spacing:-0.55px">RESULT_VARIABLE_1</div>
<div class="a" style="left:286px;top:454.6px;width:503px;height:1.0px;background:#edf0f5"></div>
<svg class="a" style="left:294.3px;top:464.2px;" width="8.4" height="7.4" viewBox="0 0 8.4 7.4"><path d="M4.2 0V7.4M0 3.7H8.4" stroke="#1e293b" stroke-width="1.1"/></svg>
<div class="t" style="left:308.8px;top:463.00px;font-size:10px;font-weight:700;color:#1e293b;">Add or</div>
<div class="a" style="left:285px;top:490.6px;width:505px;height:166.60000000000002px;background:#fff;border:1px solid #e5e9f0;border-radius:5px"></div>
<div class="a" style="left:286px;top:517px;width:503px;height:1px;background:#edf0f5"></div>
<svg class="a" style="left:294.7px;top:501.7px;" width="7.5" height="4.5" viewBox="0 0 7.5 4.5"><path d="M0.6 0.6 L3.75 3.8 L6.9 0.6" fill="none" stroke="#475569" stroke-width="1.2" stroke-linecap="round" stroke-linejoin="round"/></svg>
<svg class="a" style="left:309.9px;top:498.1px;" width="10.4" height="11" viewBox="0 0 10.4 11"><g fill="#f59e0b"><path d="M0.8 10.8 H8.9 L8.4 9.5 H1.3 Z"/><path d="M2.2 9.6 L0.5 4.6 L2.9 3.8 L5.6 9.6 Z"/><path d="M0.4 4.5 L6.2 0.6 L7.9 2.5 L2.2 5.9 Z"/><path d="M6 0.5 L8.3 0.1 L10.3 2.8 L9.1 4.7 L7.3 3.1 Z"/></g><path d="M2.2 8.6 L1.6 5.5" stroke="#fcd34d" stroke-width="0.8"/></svg>
<div class="t" style="left:325.1px;top:500.00px;font-size:10px;font-weight:700;color:#0f172a;">Robot move relative</div>
<div class="a" style="left:767.5px;top:502.9px;width:2.0px;height:2.0px;background:#1e293b;border-radius:50%"></div>
<div class="a" style="left:771.6px;top:502.9px;width:2.0px;height:2.0px;background:#1e293b;border-radius:50%"></div>
<div class="a" style="left:775.7px;top:502.9px;width:2.0px;height:2.0px;background:#1e293b;border-radius:50%"></div>
<div class="t" style="left:295.5px;top:529.00px;font-size:10px;font-weight:700;color:#1e293b;">Move type</div>
<div class="t" style="left:419.2px;top:529.00px;font-size:10px;font-weight:700;color:#1e293b;">Speed</div>
<div class="t" style="left:542.5px;top:529.00px;font-size:10px;font-weight:700;color:#1e293b;">Acceleration</div>
<div class="t" style="left:666.0px;top:529.00px;font-size:10px;font-weight:700;color:#1e293b;">Reference frame</div>
<div class="a" style="left:294.2px;top:542.5px;width:115.19999999999999px;height:21.0px;background:#fff;border:1px solid #e2e8f0;border-radius:3px;box-shadow:0 1px 1.5px rgba(15,23,42,0.04)"></div>
<div class="t" style="left:302.0px;top:548.00px;font-size:10.4px;font-weight:400;color:#334155;">Move L</div>
<svg class="a" style="left:395.4px;top:550.7px;" width="7.6" height="4.4" viewBox="0 0 7.6 4.4"><path d="M0.6 0.6 L3.8 3.8 L7 0.6" fill="none" stroke="#334155" stroke-width="1.2" stroke-linecap="round" stroke-linejoin="round"/></svg>
<div class="a" style="left:418.4px;top:542.5px;width:114.20000000000005px;height:21.0px;background:#fff;border:1px solid #e2e8f0;border-radius:3px;box-shadow:0 1px 1.5px rgba(15,23,42,0.04)"></div>
<div class="t" style="left:425.3px;top:548.00px;font-size:10.4px;font-weight:400;color:#334155;">150</div>
<div class="t" style="right:1071.4px;top:549.00px;font-size:8.6px;font-weight:400;color:#94a3b8;">mm/s</div>
<div class="a" style="left:541.6px;top:542.5px;width:114.19999999999993px;height:21.0px;background:#fff;border:1px solid #e2e8f0;border-radius:3px;box-shadow:0 1px 1.5px rgba(15,23,42,0.04)"></div>
<div class="t" style="left:548.5px;top:548.00px;font-size:10.4px;font-weight:400;color:#334155;">1000</div>
<div class="t" style="right:948.2px;top:549.00px;font-size:8.6px;font-weight:400;color:#94a3b8;">mm/s&#178;</div>
<div class="a" style="left:665px;top:542.5px;width:114.29999999999995px;height:21.0px;background:#fff;border:1px solid #e2e8f0;border-radius:3px;box-shadow:0 1px 1.5px rgba(15,23,42,0.04)"></div>
<div class="t" style="left:672.3px;top:548.00px;font-size:10.4px;font-weight:400;color:#334155;">Robot base</div>
<svg class="a" style="left:765.3px;top:550.7px;" width="7.6" height="4.4" viewBox="0 0 7.6 4.4"><path d="M0.6 0.6 L3.8 3.8 L7 0.6" fill="none" stroke="#334155" stroke-width="1.2" stroke-linecap="round" stroke-linejoin="round"/></svg>
<div class="t" style="left:295.5px;top:578.00px;font-size:10px;font-weight:700;color:#1e293b;">Position</div>
<div class="a" style="left:294.5px;top:591.6px;width:156.10000000000002px;height:20.799999999999955px;background:#fff;border:1px solid #e2e8f0;border-radius:3px;box-shadow:0 1px 1.5px rgba(15,23,42,0.04)"></div>
<div class="a" style="left:295.0px;top:592.1px;width:27.0px;height:19.799999999999955px;background:#fde4e4;border-radius:2.5px 0 0 2.5px"></div>
<div class="t" style="left:308.5px;top:597.00px;font-size:10.4px;font-weight:400;color:#b42323;transform:translateX(-50%)">X</div>
<div class="t" style="left:327.7px;top:597.00px;font-size:10.4px;font-weight:400;color:#334155;">0</div>
<div class="t" style="right:1153.4px;top:598.00px;font-size:8.6px;font-weight:400;color:#94a3b8;">mm</div>
<div class="a" style="left:459.4px;top:591.6px;width:155.60000000000002px;height:20.799999999999955px;background:#fff;border:1px solid #e2e8f0;border-radius:3px;box-shadow:0 1px 1.5px rgba(15,23,42,0.04)"></div>
<div class="a" style="left:459.9px;top:592.1px;width:27.0px;height:19.799999999999955px;background:#d9f7e3;border-radius:2.5px 0 0 2.5px"></div>
<div class="t" style="left:473.4px;top:597.00px;font-size:10.4px;font-weight:400;color:#1f7a45;transform:translateX(-50%)">Y</div>
<div class="t" style="left:492.6px;top:597.00px;font-size:10.4px;font-weight:400;color:#334155;">250</div>
<div class="t" style="right:989.0px;top:598.00px;font-size:8.6px;font-weight:400;color:#94a3b8;">mm</div>
<div class="a" style="left:623.7px;top:591.6px;width:155.5999999999999px;height:20.799999999999955px;background:#fff;border:1px solid #e2e8f0;border-radius:3px;box-shadow:0 1px 1.5px rgba(15,23,42,0.04)"></div>
<div class="a" style="left:624.2px;top:592.1px;width:27.0px;height:19.799999999999955px;background:#dde9fd;border-radius:2.5px 0 0 2.5px"></div>
<div class="t" style="left:637.7px;top:597.00px;font-size:10.4px;font-weight:400;color:#2f5fb3;transform:translateX(-50%)">Z</div>
<div class="t" style="left:656.9px;top:597.00px;font-size:10.4px;font-weight:400;color:#334155;">0</div>
<div class="t" style="right:824.7px;top:598.00px;font-size:8.6px;font-weight:400;color:#94a3b8;">mm</div>
<div class="a" style="left:294.5px;top:624.4px;width:156.10000000000002px;height:20.5px;background:#fff;border:1px solid #e2e8f0;border-radius:3px;box-shadow:0 1px 1.5px rgba(15,23,42,0.04)"></div>
<div class="a" style="left:295.0px;top:624.9px;width:27.0px;height:19.5px;background:#fde4e4;border-radius:2.5px 0 0 2.5px"></div>
<div class="t" style="left:308.5px;top:630.00px;font-size:10.4px;font-weight:400;color:#b42323;transform:translateX(-50%)">Rx</div>
<div class="t" style="left:327.7px;top:630.00px;font-size:10.4px;font-weight:400;color:#334155;">0</div>
<div class="t" style="right:1153.4px;top:631.00px;font-size:8.6px;font-weight:400;color:#94a3b8;">deg</div>
<div class="a" style="left:459.4px;top:624.4px;width:155.60000000000002px;height:20.5px;background:#fff;border:1px solid #e2e8f0;border-radius:3px;box-shadow:0 1px 1.5px rgba(15,23,42,0.04)"></div>
<div class="a" style="left:459.9px;top:624.9px;width:27.0px;height:19.5px;background:#d9f7e3;border-radius:2.5px 0 0 2.5px"></div>
<div class="t" style="left:473.4px;top:630.00px;font-size:10.4px;font-weight:400;color:#1f7a45;transform:translateX(-50%)">Ry</div>
<div class="t" style="left:492.6px;top:630.00px;font-size:10.4px;font-weight:400;color:#334155;">0</div>
<div class="t" style="right:989.0px;top:631.00px;font-size:8.6px;font-weight:400;color:#94a3b8;">deg</div>
<div class="a" style="left:623.7px;top:624.4px;width:155.5999999999999px;height:20.5px;background:#fff;border:1px solid #e2e8f0;border-radius:3px;box-shadow:0 1px 1.5px rgba(15,23,42,0.04)"></div>
<div class="a" style="left:624.2px;top:624.9px;width:27.0px;height:19.5px;background:#dde9fd;border-radius:2.5px 0 0 2.5px"></div>
<div class="t" style="left:637.7px;top:630.00px;font-size:10.4px;font-weight:400;color:#2f5fb3;transform:translateX(-50%)">Rz</div>
<div class="t" style="left:656.9px;top:630.00px;font-size:10.4px;font-weight:400;color:#334155;">0</div>
<div class="t" style="right:824.7px;top:631.00px;font-size:8.6px;font-weight:400;color:#94a3b8;">deg</div>
<div class="a" style="left:285px;top:667.3px;width:505px;height:111.10000000000002px;background:#fff;border:1px solid #e5e9f0;border-radius:5px"></div>
<div class="a" style="left:286px;top:693px;width:503px;height:1px;background:#edf0f5"></div>
<svg class="a" style="left:294.7px;top:678.3000000000001px;" width="7.5" height="4.5" viewBox="0 0 7.5 4.5"><path d="M0.6 0.6 L3.75 3.8 L6.9 0.6" fill="none" stroke="#475569" stroke-width="1.2" stroke-linecap="round" stroke-linejoin="round"/></svg>
<svg class="a" style="left:309.8px;top:675.6px;" width="10.2" height="10.2" viewBox="0 0 10.2 10.2"><g stroke="#f59e0b" fill="#f59e0b"><path d="M2 8.2 L8.2 2" stroke-width="1.3" fill="none"/><circle cx="1.7" cy="8.5" r="1.6" stroke-width="0"/><circle cx="8.5" cy="1.7" r="1.6" stroke-width="0"/></g></svg>
<div class="t" style="left:325.1px;top:676.00px;font-size:10px;font-weight:700;color:#0f172a;">Move absolute</div>
<div class="a" style="left:767.5px;top:679.5px;width:2.0px;height:2.0px;background:#1e293b;border-radius:50%"></div>
<div class="a" style="left:771.6px;top:679.5px;width:2.0px;height:2.0px;background:#1e293b;border-radius:50%"></div>
<div class="a" style="left:775.7px;top:679.5px;width:2.0px;height:2.0px;background:#1e293b;border-radius:50%"></div>
<div class="t" style="left:607.4px;top:675.00px;font-size:10.5px;font-weight:400;color:#334155;">Wait for motion completion</div>
<div class="a" style="left:738.2px;top:675.6px;width:18.09999999999991px;height:9.699999999999932px;background:#1e293b;border-radius:5px"></div>
<div class="a" style="left:748.2px;top:677px;width:6.699999999999932px;height:6.7999999999999545px;background:#fff;border-radius:50%"></div>
<div class="t" style="left:295.5px;top:705.00px;font-size:10px;font-weight:700;color:#1e293b;">Axis</div>
<div class="t" style="left:542.4px;top:705.00px;font-size:10px;font-weight:700;color:#1e293b;">Position</div>
<div class="a" style="left:294.5px;top:719.4px;width:238.10000000000002px;height:20.300000000000068px;background:#fff;border:1px solid #e2e8f0;border-radius:3px;box-shadow:0 1px 1.5px rgba(15,23,42,0.04)"></div>
<svg class="a" style="left:299.8px;top:724.6px;" width="10.2" height="10.2" viewBox="0 0 10.5 10.5"><g fill="none" stroke="#64748b" stroke-width="1.0" stroke-linejoin="round"><path d="M0.9 8.3 L5.6 3.6 L7.4 5.4 L2.7 10.1 Z"/><path d="M2.2 7.0 L4 8.8" /><path d="M6.3 4.3 L8.2 2.4"/><circle cx="8.9" cy="1.7" r="1.1"/></g></svg>
<div class="t" style="left:316.8px;top:725.00px;font-size:10.4px;font-weight:400;color:#334155;">Actuator</div>
<svg class="a" style="left:518.6px;top:727.6px;" width="7.6" height="4.4" viewBox="0 0 7.6 4.4"><path d="M0.6 0.6 L3.8 3.8 L7 0.6" fill="none" stroke="#334155" stroke-width="1.2" stroke-linecap="round" stroke-linejoin="round"/></svg>
<div class="a" style="left:541.6px;top:719.4px;width:179.29999999999995px;height:20.300000000000068px;background:#fff;border:1px solid #e2e8f0;border-radius:3px;box-shadow:0 1px 1.5px rgba(15,23,42,0.04)"></div>
<div class="t" style="left:545.8px;top:723.00px;font-size:13px;font-weight:400;color:#7b879a;font-family:"Liberation Serif";font-style:italic">&#402;</div>
<div class="t" style="left:552.6px;top:727.00px;font-size:8.5px;font-weight:400;color:#7b879a;">&#215;</div>
<div class="t" style="left:563.6px;top:725.00px;font-size:10.4px;font-weight:400;color:#334155;">500</div>
<div class="t" style="right:883.1px;top:726.00px;font-size:8.6px;font-weight:400;color:#94a3b8;">mm</div>
<div class="a" style="left:729.3px;top:719.4px;width:21.100000000000023px;height:20.300000000000068px;background:#fff;border:1px solid #e2e8f0;border-radius:3px;box-shadow:0 1px 1.5px rgba(15,23,42,0.04)"></div>
<svg class="a" style="left:734.4px;top:724.2px;" width="11" height="11" viewBox="0 0 11 11"><g fill="none" stroke="#475569" stroke-width="1.1" transform="translate(5.5,5.5) rotate(45)"><rect x="-1.9" y="-6.3" width="3.8" height="12.6" rx="1.1"/><path d="M-1.9 -3.4 H1.9"/></g></svg>
<div class="a" style="left:286px;top:752.2px;width:503px;height:1.0px;background:#edf0f5"></div>
<svg class="a" style="left:294.3px;top:762.3px;" width="8.4" height="7.4" viewBox="0 0 8.4 7.4"><path d="M4.2 0V7.4M0 3.7H8.4" stroke="#1e293b" stroke-width="1.1"/></svg>
<div class="t" style="left:308.7px;top:761.00px;font-size:10px;font-weight:700;color:#1e293b;">Add axis</div>
<div class="a" style="left:285px;top:788.2px;width:505px;height:85.29999999999995px;background:#fff;border:1px solid #e5e9f0;border-radius:5px"></div>
<div class="a" style="left:286px;top:814.1px;width:503px;height:1.0px;background:#edf0f5"></div>
<svg class="a" style="left:294.7px;top:799.6px;" width="7.5" height="4.5" viewBox="0 0 7.5 4.5"><path d="M0.6 0.6 L3.75 3.8 L6.9 0.6" fill="none" stroke="#475569" stroke-width="1.2" stroke-linecap="round" stroke-linejoin="round"/></svg>
<svg class="a" style="left:309.2px;top:796.3px;" width="11.2" height="11.2" viewBox="0 0 12 12"><g stroke="#1fae7a" stroke-width="1.1" stroke-linejoin="round"><path d="M10.07 7.68 L10.00 7.84 L9.92 8.00 L9.84 8.15 L9.75 8.30 L9.66 8.44 L9.56 8.59 L9.95 9.12 L10.26 9.64 L10.11 9.80 L9.96 9.96 L9.80 10.11 L9.64 10.26 L9.12 9.95 L8.59 9.56 L8.44 9.66 L8.30 9.75 L8.15 9.84 L8.00 9.92 L7.84 10.00 L7.68 10.07 L7.52 10.13 L7.36 10.18 L7.19 10.23 L7.03 10.28 L6.86 10.32 L6.69 10.35 L6.59 11.00 L6.44 11.58 L6.22 11.60 L6.00 11.60 L5.78 11.60 L5.56 11.58 L5.41 11.00 L5.31 10.35 L5.14 10.32 L4.97 10.28 L4.81 10.23 L4.64 10.18 L4.48 10.13 L4.32 10.07 L4.16 10.00 L4.00 9.92 L3.85 9.84 L3.70 9.75 L3.56 9.66 L3.41 9.56 L2.88 9.95 L2.36 10.26 L2.20 10.11 L2.04 9.96 L1.89 9.80 L1.74 9.64 L2.05 9.12 L2.44 8.59 L2.34 8.44 L2.25 8.30 L2.16 8.15 L2.08 8.00 L2.00 7.84 L1.93 7.68 L1.87 7.52 L1.82 7.36 L1.77 7.19 L1.72 7.03 L1.68 6.86 L1.65 6.69 L1.00 6.59 L0.42 6.44 L0.40 6.22 L0.40 6.00 L0.40 5.78 L0.42 5.56 L1.00 5.41 L1.65 5.31 L1.68 5.14 L1.72 4.97 L1.77 4.81 L1.82 4.64 L1.87 4.48 L1.93 4.32 L2.00 4.16 L2.08 4.00 L2.16 3.85 L2.25 3.70 L2.34 3.56 L2.44 3.41 L2.05 2.88 L1.74 2.36 L1.89 2.20 L2.04 2.04 L2.20 1.89 L2.36 1.74 L2.88 2.05 L3.41 2.44 L3.56 2.34 L3.70 2.25 L3.85 2.16 L4.00 2.08 L4.16 2.00 L4.32 1.93 L4.48 1.87 L4.64 1.82 L4.81 1.77 L4.97 1.72 L5.14 1.68 L5.31 1.65 L5.41 1.00 L5.56 0.42 L5.78 0.40 L6.00 0.40 L6.22 0.40 L6.44 0.42 L6.59 1.00 L6.69 1.65 L6.86 1.68 L7.03 1.72 L7.19 1.77 L7.36 1.82 L7.52 1.87 L7.68 1.93 L7.84 2.00 L8.00 2.08 L8.15 2.16 L8.30 2.25 L8.44 2.34 L8.59 2.44 L9.12 2.05 L9.64 1.74 L9.80 1.89 L9.96 2.04 L10.11 2.20 L10.26 2.36 L9.95 2.88 L9.56 3.41 L9.66 3.56 L9.75 3.70 L9.84 3.85 L9.92 4.00 L10.00 4.16 L10.07 4.32 L10.13 4.48 L10.18 4.64 L10.23 4.81 L10.28 4.97 L10.32 5.14 L10.35 5.31 L11.00 5.41 L11.58 5.56 L11.60 5.78 L11.60 6.00 L11.60 6.22 L11.58 6.44 L11.00 6.59 L10.35 6.69 L10.32 6.86 L10.28 7.03 L10.23 7.19 L10.18 7.36 L10.13 7.52Z" fill="#c8f5df"/><circle cx="6" cy="6" r="1.9" fill="none" stroke-width="1.2"/></g><path d="M8.2 8.0 L12.2 10.3 L8.2 12.6Z" fill="#1fae7a" stroke="#ffffff" stroke-width="0.9" stroke-linejoin="round"/></svg>
<div class="t" style="left:325.1px;top:797.00px;font-size:10px;font-weight:700;color:#0f172a;">Loop</div>
<div class="a" style="left:767.5px;top:800.8px;width:2.0px;height:2.0px;background:#1e293b;border-radius:50%"></div>
<div class="a" style="left:771.6px;top:800.8px;width:2.0px;height:2.0px;background:#1e293b;border-radius:50%"></div>
<div class="a" style="left:775.7px;top:800.8px;width:2.0px;height:2.0px;background:#1e293b;border-radius:50%"></div>
<div class="t" style="left:295.5px;top:826.00px;font-size:10px;font-weight:700;color:#1e293b;">Run</div>
<div class="t" style="left:460.6px;top:826.00px;font-size:10px;font-weight:700;color:#1e293b;">Until</div>
<div class="t" style="left:413.9px;top:825.00px;font-size:10.5px;font-weight:400;color:#3b82f6;">Open</div>
<svg class="a" style="left:442.6px;top:827px;" width="6" height="6" viewBox="0 0 6 6"><path d="M0.6 5.4 L5.4 0.6 M1.6 0.6 H5.4 V4.4" fill="none" stroke="#3b82f6" stroke-width="1.1"/></svg>
<div class="a" style="left:294.5px;top:840.3px;width:156.3px;height:20.5px;background:#fff;border:1px solid #e2e8f0;border-radius:3px;box-shadow:0 1px 1.5px rgba(15,23,42,0.04)"></div>
<svg class="a" style="left:300.4px;top:846.3px;" width="10" height="8.8" viewBox="0 0 10 8.8"><g fill="none" stroke="#64748b" stroke-width="1"><rect x="0.5" y="0.5" width="3.6" height="3.1" rx="0.5"/><rect x="0.5" y="5.2" width="3.6" height="3.1" rx="0.5"/><path d="M7.6 0.3V8.2M5.7 6.3 L7.6 8.2 L9.5 6.3" stroke-linecap="round" stroke-linejoin="round"/></g></svg>
<div class="t" style="left:316.8px;top:846.00px;font-size:10.4px;font-weight:400;color:#334155;">Production loop</div>
<svg class="a" style="left:436.8px;top:848.5px;" width="7.6" height="4.4" viewBox="0 0 7.6 4.4"><path d="M0.6 0.6 L3.8 3.8 L7 0.6" fill="none" stroke="#334155" stroke-width="1.2" stroke-linecap="round" stroke-linejoin="round"/></svg>
<div class="a" style="left:459.5px;top:840.3px;width:155.5px;height:20.5px;background:#fff;border:1px solid #e2e8f0;border-radius:3px;box-shadow:0 1px 1.5px rgba(15,23,42,0.04)"></div>
<div class="t" style="left:467.2px;top:846.00px;font-size:10.4px;font-weight:400;color:#334155;">Forever</div>
<svg class="a" style="left:601px;top:848.5px;" width="7.6" height="4.4" viewBox="0 0 7.6 4.4"><path d="M0.6 0.6 L3.8 3.8 L7 0.6" fill="none" stroke="#334155" stroke-width="1.2" stroke-linecap="round" stroke-linejoin="round"/></svg>
<svg class="a" style="left:0;top:0" width="1600" height="913" viewBox="0 0 1600 913"><defs><clipPath id="vp"><rect x="800" y="93" width="522" height="804"/></clipPath></defs><g clip-path="url(#vp)"><polygon points="1219,252 1251,246 1245,522 1221,506" fill="#25375f" /><line x1="1228" y1="300" x2="1225" y2="508" stroke="#4462a0" stroke-width="1.5"/><line x1="1235" y1="300" x2="1232" y2="508" stroke="#4462a0" stroke-width="1.5"/><line x1="1242" y1="300" x2="1239" y2="508" stroke="#4462a0" stroke-width="1.5"/><line x1="1248" y1="300" x2="1245" y2="508" stroke="#4462a0" stroke-width="1.5"/><polygon points="1251,258 1280,256 1276,535 1245,522" fill="#4a6aa6" /><polygon points="1219,253 1244,246 1252,246 1277,254 1280,258 1251,262 1219,256" fill="#5676b3" /><polygon points="1281,294 1318,303 1294,312 1280,307" fill="#b9bac8" /><polygon points="1280,307 1294,312 1294,360 1278,356" fill="#5f6079" /><polygon points="1294,312 1318,303 1318,350 1294,360" fill="#a9abc6" /><polygon points="1297,313 1310,309 1310,331 1297,335" fill="#d4d6e4" /><polygon points="1280,310 1292,313 1292,328 1280,326" fill="#1d1f26" /><path d="M1283 357 L1285 373 L1311 367 L1309 352" fill="none" stroke="#2a2d36" stroke-width="2.2"/><polygon points="812,388 845,376 1244,246 1251,246 1251,303 1160,333 1000,385 880,427 842,398" fill="#4a69a5" /><polygon points="813,386 845,376 1244,246 1251,246 1251,288 1160,309.5 1000,349 876,391 842,398" fill="#4866a0" /><polyline points="876.0,368.7 1000.0,328.0 1160.0,277.6 1251.0,251.2" fill="none" stroke="#3a578e" stroke-width="1.2"/><polyline points="876.0,371.9 1000.0,331.0 1160.0,282.1 1251.0,256.5" fill="none" stroke="#5f80bd" stroke-width="1.0"/><polyline points="876.0,375.1 1000.0,334.0 1160.0,286.7 1251.0,261.8" fill="none" stroke="#3a578e" stroke-width="1.2"/><polyline points="876.0,378.2 1000.0,337.0 1160.0,291.2 1251.0,267.0" fill="none" stroke="#5f80bd" stroke-width="1.0"/><polyline points="876.0,381.4 1000.0,340.0 1160.0,295.8 1251.0,272.2" fill="none" stroke="#3a578e" stroke-width="1.2"/><polyline points="876.0,384.6 1000.0,343.0 1160.0,300.4 1251.0,277.5" fill="none" stroke="#5c7cb9" stroke-width="1.0"/><polyline points="876.0,387.8 1000.0,346.0 1160.0,304.9 1251.0,282.8" fill="none" stroke="#3a578e" stroke-width="1.1"/><polyline points="876,391 1000,349 1160,309.5 1251,288" fill="none" stroke="#7090cc" stroke-width="1.3"/><polygon points="880,420 1000,378 1160,327 1251,297 1251,303 1160,333 1000,385 880,427" fill="#3d5b95" /><polygon points="812,388 842,398 851,742 824,737" fill="#26385f" /><line x1="820" y1="470" x2="826" y2="735" stroke="#4664a0" stroke-width="1.6"/><line x1="828" y1="470" x2="835" y2="735" stroke="#4664a0" stroke-width="1.6"/><line x1="835" y1="470" x2="843" y2="735" stroke="#4664a0" stroke-width="1.6"/><polygon points="842,398 878,388 880,427 883,742 851,742" fill="#4a6aa7" /><path d="M861 432 L864 740 M871 430 L874 740" stroke="#3f5d98" stroke-width="1.1" stroke-dasharray="5 2" fill="none"/><path d="M1258 320 L1255 528 M1268 320 L1266 532" stroke="#3f5d98" stroke-width="1.1" stroke-dasharray="5 2" fill="none"/><polygon points="812,388 845,376 876,388 842,398" fill="#5a7bb8" /><path d="M820 405 L828 423 L836 410" fill="none" stroke="#7d6a55" stroke-width="2.2" stroke-linecap="round" stroke-linejoin="round" opacity="0.9"/><polygon points="886,396 897,393 898,418 887,421" fill="#25375f" /><circle cx="892" cy="407" r="2.5" fill="#5a6480"/><polygon points="805,745 853,763 905,745 905,750 853,770 805,749" fill="#2f4679" /><polygon points="805,745 824,737 886,736 905,745 853,763" fill="#4764a0" /><path d="M1061 289 L971 313 Q952 320 955 334 Q959 346 971 344" fill="none" stroke="#1b1c20" stroke-width="6" stroke-linejoin="round"/><polygon points="968,341 1062,315 1064,322 972,349" fill="#1b1c20" /><polygon points="978,345 990,342 991,352 979,355" fill="#26272d" /><polygon points="1000,331 1012,326 1018,334 1004,339" fill="#3d5c96" /><polygon points="1048,292 1066,286 1081,292 1063,298" fill="#4866a3" /><polygon points="1069,296 1081,292 1081,336 1069,340" fill="#3d5b95" /><polygon points="1075,294 1081,292 1081,336 1075,338" fill="#5272b0" /><polygon points="1211,291 1246,281 1255,290 1250,300 1219,308 1219,297" fill="#1f2023" /><polygon points="1067,334 1090,328 1091,366 1068,372" fill="#3e5d99" /><ellipse cx="1090" cy="350" rx="14" ry="17" fill="#a8a8bb"/><ellipse cx="1093" cy="350" rx="9" ry="12" fill="#7f8090"/><path d="M1097 340 L1148 332 Q1158 350 1148 370 L1104 376 Z" fill="#9a9ba3"/><ellipse cx="1148" cy="351" rx="7" ry="17" fill="#5d9fe0"/><ellipse cx="1145" cy="351" rx="6" ry="15" fill="#a9aab2"/><path d="M1112 368 L1133 368 L1098 424 L1080 420 Z" fill="#3a3c46"/><path d="M1080 420 L1132 398 L1138 414 L1088 440 Z" fill="#3a3c46"/><ellipse cx="1083" cy="430" rx="10" ry="11" fill="#2b2d35"/><ellipse cx="1086" cy="429" rx="6" ry="8" fill="#8d8e98"/><ellipse cx="1119" cy="360" rx="13" ry="14" fill="#5b9ddd"/><ellipse cx="1121" cy="359" rx="10" ry="11" fill="#6aaae6"/><path d="M1132 400 L1160 392 Q1168 402 1160 410 L1136 416 Z" fill="#9c9da6"/><ellipse cx="1136" cy="408" rx="7" ry="9" fill="#5d9fe0"/><path d="M1150 376 L1164 372 L1166 406 L1152 410 Z" fill="#8e8f99"/><path d="M1148 378 L1186 382 L1190 398 L1150 394 Z" fill="#9a9ba5"/><ellipse cx="1152" cy="383" rx="6" ry="9" fill="#5d9fe0"/><ellipse cx="1154" cy="382" rx="4" ry="7" fill="#9a9ba5"/><path d="M1186 386 Q1192 378 1200 383 M1186 394 Q1192 404 1196 405 M1184 382 L1192 398" fill="none" stroke="#8c8d97" stroke-width="2.2"/><line x1="1086" y1="347" x2="1086" y2="306" stroke="#57c27a" stroke-width="2.2"/><line x1="1088" y1="347" x2="1125" y2="336" stroke="#e8504c" stroke-width="2.2"/><line x1="1088" y1="350" x2="1124" y2="362" stroke="#4f8ff0" stroke-width="2.2"/><polygon points="1277,392 1302,397 1302,421 1280,424" fill="#1a1b20" /><polygon points="1247,415 1288,401 1300,433 1263,447" fill="#5f8fd6" /><polygon points="1251,417 1286,405 1296,431 1264,443" fill="#c9ccd6" /><polygon points="1265,448 1294,437 1296,441 1268,452" fill="#24262c" /><polygon points="1276,462 1300,466 1307,472 1307,532 1276,526" fill="#3d5a94" /><polygon points="1276,459 1300,460 1307,468 1307,472 1276,467" fill="#1c1d22" /><polygon points="1294,470 1297,471 1297,531 1294,530" fill="#15161a" /><polygon points="1277,500 1290,502 1290,525 1277,523" fill="#2a3350" /><polygon points="1252,476 1272,471 1274,488 1253,493" fill="#262830" /><circle cx="1268" cy="481" r="3.2" fill="#e3c52a"/><circle cx="1268.5" cy="481" r="1.7" fill="#d02525"/><polygon points="1160,604 1298,551 1298,666 1183,622 1160,631" fill="#0e0f14" /><polygon points="1210,611 1225,614 1225,630 1210,627" fill="#ffffff" /><polygon points="1107,626 1150,609 1150,636 1107,653" fill="#111217" /><polygon points="1107,673 1150,688 1150,697 1107,712" fill="#15161b" /><path d="M1107 652 L1150 635 M1160 636 L1222 662 M1180 625 L1252 652 M1252 656 L1298 670 M1107 671 L1150 686" fill="none" stroke="#4a69a6" stroke-width="5"/><polygon points="1150,606 1160,603 1160,690 1150,693" fill="#4766a3" /><path d="M1108 673 L1148 614" stroke="#6b8ac6" stroke-width="6"/><path d="M1110 668 L1146 616" stroke="#a9c0e8" stroke-width="0.8"/><path d="M1262 566 L1299 602" stroke="#4b6aa7" stroke-width="6"/><polygon points="978,577 1097,624 1097,752 980,703" fill="#0d0e13" /><circle cx="1034" cy="623" r="5" fill="#24252c"/><polygon points="974,566 983,570 983,712 975,708" fill="#4564a1" /><path d="M981 704 L1097 751" stroke="#4766a3" stroke-width="5.5"/><polygon points="1096,618 1106,614 1106,760 1096,760" fill="#4a69a6" /><polygon points="1297,538 1309,534 1309,678 1298,678" fill="#4a69a6" /><path d="M1106 713 L1252 656" stroke="#4766a3" stroke-width="6"/><polygon points="983,690 995,708 983,708" fill="#3c5a95" /><polygon points="1080,744 1096,744 1096,726" fill="#3c5a95" /><polygon points="1080,617 1096,620 1096,640" fill="#3c5a95" /><ellipse cx="982" cy="714.5" rx="6" ry="3" fill="#1a1b20"/><ellipse cx="1102" cy="766" rx="6" ry="3.2" fill="#1a1b20"/><ellipse cx="1302" cy="681" rx="6" ry="3" fill="#1a1b20"/><polygon points="974,567 1099,616 1306,532 1309,546 1099,630 976,580" fill="#4261a0" /><polygon points="974,567 1184,487 1306,532 1099,616" fill="#4a68a1" /><path d="M978.2 568.6 L1188.1 488.5 M982.3 570.3 L1192.1 490.0 M986.5 571.9 L1196.2 491.5 M990.7 573.5 L1200.3 493.0 M994.8 575.2 L1204.3 494.5 M999.0 576.8 L1208.4 496.0 M1003.2 578.4 L1212.5 497.5 M1007.3 580.1 L1216.5 499.0 M1011.5 581.7 L1220.6 500.5 M1015.7 583.3 L1224.7 502.0 M1019.8 585.0 L1228.7 503.5 M1024.0 586.6 L1232.8 505.0 M1028.2 588.2 L1236.9 506.5 M1032.3 589.9 L1240.9 508.0 M1036.5 591.5 L1245.0 509.5 M1040.7 593.1 L1249.1 511.0 M1044.8 594.8 L1253.1 512.5 M1049.0 596.4 L1257.2 514.0 M1053.2 598.0 L1261.3 515.5 M1057.3 599.7 L1265.3 517.0 M1061.5 601.3 L1269.4 518.5 M1065.7 602.9 L1273.5 520.0 M1069.8 604.6 L1277.5 521.5 M1074.0 606.2 L1281.6 523.0 M1078.2 607.8 L1285.7 524.5 M1082.3 609.5 L1289.7 526.0 M1086.5 611.1 L1293.8 527.5 M1090.7 612.7 L1297.9 529.0 M1094.8 614.4 L1301.9 530.5" stroke="#5e7fbb" stroke-width="1.5" fill="none"/><path d="M980.0 569.4 L1189.9 489.2 M984.2 571.0 L1194.0 490.7 M988.4 572.6 L1198.0 492.2 M992.5 574.3 L1202.1 493.7 M996.7 575.9 L1206.2 495.2 M1000.9 577.5 L1210.2 496.7 M1005.0 579.2 L1214.3 498.2 M1009.2 580.8 L1218.4 499.7 M1013.4 582.4 L1222.4 501.2 M1017.5 584.1 L1226.5 502.7 M1021.7 585.7 L1230.6 504.2 M1025.9 587.3 L1234.6 505.7 M1030.0 589.0 L1238.7 507.2 M1034.2 590.6 L1242.8 508.7 M1038.4 592.2 L1246.8 510.2 M1042.5 593.9 L1250.9 511.7 M1046.7 595.5 L1255.0 513.2 M1050.9 597.1 L1259.0 514.7 M1055.0 598.8 L1263.1 516.2 M1059.2 600.4 L1267.2 517.7 M1063.4 602.0 L1271.2 519.2 M1067.5 603.7 L1275.3 520.7 M1071.7 605.3 L1279.4 522.2 M1075.9 606.9 L1283.4 523.7 M1080.0 608.6 L1287.5 525.2 M1084.2 610.2 L1291.6 526.7 M1088.4 611.8 L1295.6 528.2 M1092.5 613.5 L1299.7 529.7 M1096.7 615.1 L1303.8 531.2" stroke="#3c5889" stroke-width="0.9" fill="none"/><polygon points="1057,541 1096,526 1096,549 1070,556" fill="#9e9ea8" /><polygon points="1096,526 1124,537 1124,562 1096,549" fill="#4b4b56" /><rect x="1069" y="521" width="13" height="30" fill="#8f909b"/><rect x="1075" y="521" width="7" height="30" fill="#a7a8b1"/><ellipse cx="1075.5" cy="521" rx="6.5" ry="2.5" fill="#b9bac2"/><polygon points="1057,541 1085,554 1085,599 1058,587" fill="#62626e" /><polygon points="1085,554 1124,537 1124,583 1085,599" fill="#a8a9b1" /><rect x="1129.5" y="551" width="13" height="40" fill="#a2a3ac"/><rect x="1129.5" y="551" width="4" height="40" fill="#8a8b95"/><ellipse cx="1136" cy="551" rx="6.5" ry="2.5" fill="#c1c2ca"/><rect x="1148" y="544" width="13" height="40" fill="#9d9ea8"/><rect x="1148" y="544" width="4" height="40" fill="#85868f"/><ellipse cx="1154.5" cy="544" rx="6.5" ry="2.5" fill="#c1c2ca"/><line x1="1006" y1="553" x2="1006" y2="601" stroke="#4f8ff0" stroke-width="2.2" opacity="0.8"/><line x1="1006" y1="553" x2="1043" y2="541" stroke="#e8605c" stroke-width="2.4" opacity="0.8"/><line x1="1006" y1="553" x2="1043" y2="568" stroke="#4fbf7a" stroke-width="2.4" opacity="0.8"/><circle cx="1006" cy="553" r="2.6" fill="#6d7486"/><line x1="1123" y1="597" x2="1123" y2="643" stroke="#4f8ff0" stroke-width="2.2" opacity="0.8"/><line x1="1123" y1="597" x2="1160" y2="612" stroke="#e8605c" stroke-width="2.4" opacity="0.8"/><line x1="1123" y1="597" x2="1085" y2="612" stroke="#4fbf7a" stroke-width="2.4" opacity="0.8"/><circle cx="1123" cy="597" r="2.6" fill="#6d7486"/><line x1="1154" y1="550" x2="1152" y2="597" stroke="#4f8ff0" stroke-width="2.2" opacity="0.8"/><line x1="1154" y1="550" x2="1188" y2="566" stroke="#e8605c" stroke-width="2.4" opacity="0.8"/><line x1="1154" y1="550" x2="1115" y2="566" stroke="#4fbf7a" stroke-width="2.4" opacity="0.8"/><circle cx="1154" cy="550" r="2.6" fill="#6d7486"/><line x1="1126" y1="510" x2="1126" y2="557" stroke="#4f8ff0" stroke-width="2.2" opacity="0.8"/><line x1="1126" y1="510" x2="1163" y2="497" stroke="#e8605c" stroke-width="2.4" opacity="0.8"/><line x1="1126" y1="510" x2="1145" y2="517" stroke="#4fbf7a" stroke-width="2.4" opacity="0.8"/><circle cx="1126" cy="510" r="2.6" fill="#6d7486"/><line x1="1150" y1="518" x2="1150" y2="598" stroke="#4f8ff0" stroke-width="2.2" opacity="0.8"/><line x1="1150" y1="518" x2="1186" y2="505" stroke="#e8605c" stroke-width="2.4" opacity="0.8"/><line x1="1150" y1="518" x2="1185" y2="532" stroke="#4fbf7a" stroke-width="2.4" opacity="0.8"/><circle cx="1150" cy="518" r="2.6" fill="#6d7486"/><line x1="1174" y1="492" x2="1174" y2="538" stroke="#4f8ff0" stroke-width="2.2" opacity="0.8"/><line x1="1174" y1="492" x2="1209" y2="480" stroke="#e8605c" stroke-width="2.4" opacity="0.8"/><line x1="1174" y1="492" x2="1198" y2="498" stroke="#4fbf7a" stroke-width="2.4" opacity="0.8"/><circle cx="1174" cy="492" r="2.6" fill="#6d7486"/><line x1="1197" y1="500" x2="1197" y2="547" stroke="#4f8ff0" stroke-width="2.2" opacity="0.8"/><line x1="1197" y1="500" x2="1233" y2="488" stroke="#e8605c" stroke-width="2.4" opacity="0.8"/><line x1="1197" y1="500" x2="1234" y2="514" stroke="#4fbf7a" stroke-width="2.4" opacity="0.8"/><circle cx="1197" cy="500" r="2.6" fill="#6d7486"/></g></svg>
</div></div>
</body></html>
